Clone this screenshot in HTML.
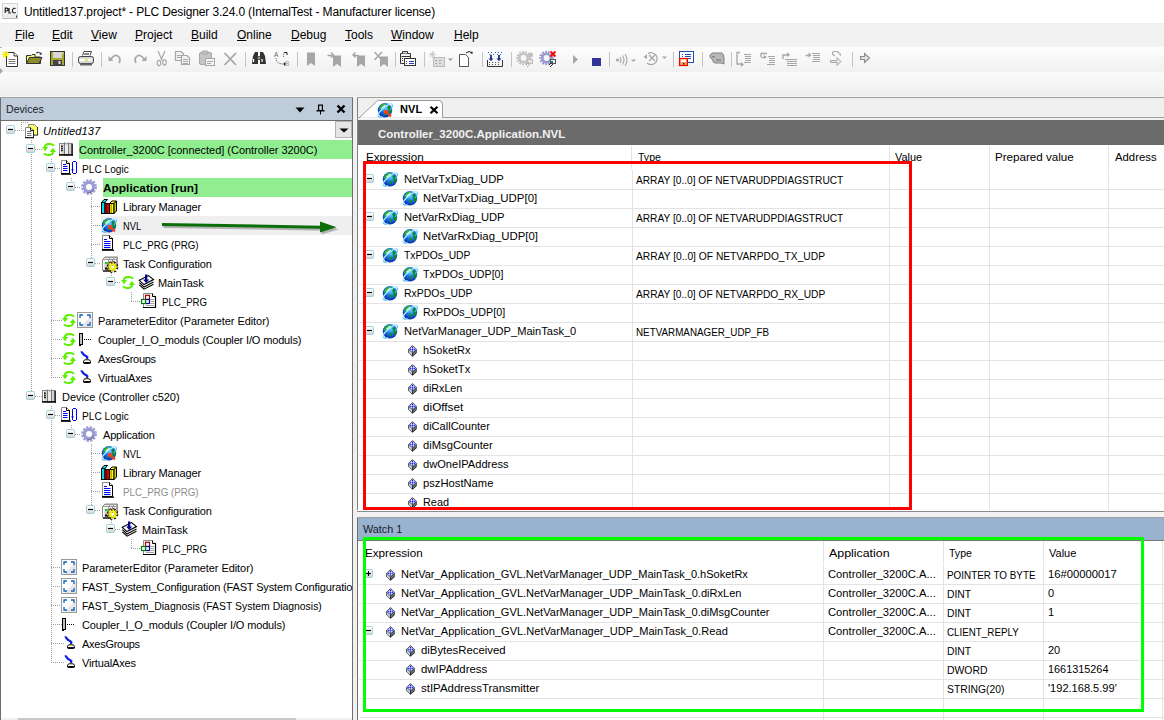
<!DOCTYPE html><html><head><meta charset="utf-8"><style>
*{margin:0;padding:0;box-sizing:border-box}
html,body{width:1164px;height:720px;overflow:hidden;background:#f0f0f0;font-family:"Liberation Sans", sans-serif;color:#000}
.a{position:absolute}
.t{position:absolute;white-space:nowrap;font-size:11px;line-height:19px;height:19px}
svg{position:absolute;overflow:visible}
.u{text-decoration:underline;text-underline-offset:1px}
</style></head><body>
<svg width="0" height="0" style="position:absolute"><defs>
<linearGradient id="gb" x1="0" y1="0" x2="0" y2="1"><stop offset="0" stop-color="#fff"/><stop offset="0.5" stop-color="#f4f4f4"/><stop offset="1" stop-color="#cfcfcf"/></linearGradient>
<radialGradient id="gl" cx="0.55" cy="0.35" r="0.7"><stop offset="0" stop-color="#60d0ff"/><stop offset="0.5" stop-color="#1a70e0"/><stop offset="1" stop-color="#0820a0"/></radialGradient>
<linearGradient id="gear" x1="0" y1="0" x2="1" y2="1"><stop offset="0" stop-color="#a8a8dc"/><stop offset="1" stop-color="#8080b8"/></linearGradient>
</defs></svg>
<div class="a" style="left:0px;top:0px;width:1164px;height:23px;background:#fff"></div>
<svg style="left:2px;top:3px" width="16" height="16" viewBox="0 0 16 16"><rect x="0.5" y="0.5" width="15" height="15" fill="#f6f6f6" stroke="#d4d4d4"/><rect x="1" y="11" width="14" height="4" fill="#ececec"/><path d="M1 15.5H16" stroke="#b8b8b8"/><path d="M3.2 10V5.2H4.6Q6 5.2 6 6.6T4.6 8H3.4M7 5V10H9.2M13.6 5.6Q12.6 5 11.6 5.4Q10.2 6.2 10.4 8.2Q10.8 10 12.2 10Q13.2 10 13.8 9.4" stroke="#222" stroke-width="1.2" fill="none"/><rect x="14" y="12.5" width="1" height="2" fill="#333"/></svg>
<div class="t" style="left:24px;top:3px;font-size:12px;line-height:19px;letter-spacing:-0.14px">Untitled137.project* - PLC Designer 3.24.0 (InternalTest - Manufacturer license)</div>
<div class="a" style="left:0px;top:23px;width:1164px;height:24px;background:#f2f2f2"></div>
<div class="a" style="left:0px;top:23px;width:1164px;height:1px;background:#efefef"></div>
<div class="t" style="left:15px;top:26px;font-size:12px;line-height:18px"><span class="u">F</span>ile</div>
<div class="t" style="left:52px;top:26px;font-size:12px;line-height:18px"><span class="u">E</span>dit</div>
<div class="t" style="left:91px;top:26px;font-size:12px;line-height:18px"><span class="u">V</span>iew</div>
<div class="t" style="left:135px;top:26px;font-size:12px;line-height:18px"><span class="u">P</span>roject</div>
<div class="t" style="left:191px;top:26px;font-size:12px;line-height:18px"><span class="u">B</span>uild</div>
<div class="t" style="left:237px;top:26px;font-size:12px;line-height:18px"><span class="u">O</span>nline</div>
<div class="t" style="left:291px;top:26px;font-size:12px;line-height:18px"><span class="u">D</span>ebug</div>
<div class="t" style="left:345px;top:26px;font-size:12px;line-height:18px"><span class="u">T</span>ools</div>
<div class="t" style="left:391px;top:26px;font-size:12px;line-height:18px"><span class="u">W</span>indow</div>
<div class="t" style="left:454px;top:26px;font-size:12px;line-height:18px"><span class="u">H</span>elp</div>
<div class="a" style="left:0px;top:47px;width:1164px;height:25px;background:linear-gradient(#fdfdfd,#f1f1f1)"></div>
<div class="a" style="left:0px;top:72px;width:1164px;height:24px;background:linear-gradient(#fbfbfb,#efefef)"></div>
<div class="a" style="left:0px;top:96px;width:1164px;height:1px;background:#f5f5f5"></div>
<svg style="left:0px;top:68px" width="4" height="6" viewBox="0 0 4 6"><path d="M0 0L3 3L0 6Z" fill="#a8a8a8"/></svg>
<div class="a" style="left:0px;top:47px;width:2px;height:1px;background:#b0b0b0"></div>
<div class="a" style="left:72px;top:52px;width:1px;height:15px;background:#c4c4c4"></div>
<div class="a" style="left:101px;top:52px;width:1px;height:15px;background:#c4c4c4"></div>
<div class="a" style="left:245px;top:52px;width:1px;height:15px;background:#c4c4c4"></div>
<div class="a" style="left:297px;top:52px;width:1px;height:15px;background:#c4c4c4"></div>
<div class="a" style="left:395px;top:52px;width:1px;height:15px;background:#c4c4c4"></div>
<div class="a" style="left:424px;top:52px;width:1px;height:15px;background:#c4c4c4"></div>
<div class="a" style="left:482px;top:52px;width:1px;height:15px;background:#c4c4c4"></div>
<div class="a" style="left:511px;top:52px;width:1px;height:15px;background:#c4c4c4"></div>
<div class="a" style="left:609px;top:52px;width:1px;height:15px;background:#c4c4c4"></div>
<div class="a" style="left:673px;top:52px;width:1px;height:15px;background:#c4c4c4"></div>
<div class="a" style="left:702px;top:52px;width:1px;height:15px;background:#c4c4c4"></div>
<div class="a" style="left:731px;top:52px;width:1px;height:15px;background:#c4c4c4"></div>
<div class="a" style="left:852px;top:52px;width:1px;height:15px;background:#c4c4c4"></div>
<svg style="left:2px;top:51px" width="26" height="16" viewBox="0 0 26 16"><path d="M4.5 1.5H12L15.5 5V15.5H4.5Z" fill="#fff" stroke="#333"/><path d="M12 1.5V5H15.5" fill="#eee" stroke="#333"/><path d="M6.5 8.5H13.5M6.5 10.5H13.5M6.5 12.5H13.5" stroke="#777"/><path d="M1 1L6 6M6 1L1 6M3.5 0V7M0 3.5H7" stroke="#f0f000" stroke-width="1.1"/></svg>
<svg style="left:26px;top:51px" width="26" height="16" viewBox="0 0 26 16"><path d="M10 2Q13 0 15 3" stroke="#222" fill="none"/><path d="M13.5 3.5H16L15 1Z" fill="#222"/><path d="M0.5 4.5H5L6 3.5H9V6H14.5V12.5H0.5Z" fill="#f4f470" stroke="#333"/><path d="M0.5 12.5L3.5 6.5H16L13 12.5Z" fill="#8c8c28" stroke="#333"/></svg>
<svg style="left:50px;top:51px" width="26" height="16" viewBox="0 0 26 16"><rect x="0.5" y="0.5" width="14" height="14" fill="#a8a830" stroke="#333"/><rect x="3" y="1" width="9" height="6" fill="#d8d8d8"/><rect x="3" y="9" width="9" height="5.5" fill="#444"/><rect x="8.5" y="10" width="2" height="3" fill="#ddd"/><rect x="12.3" y="1.5" width="1.2" height="1.2" fill="#fff"/></svg>
<svg style="left:78px;top:51px" width="26" height="16" viewBox="0 0 26 16"><path d="M4.5 4.5L6 0.5H13.5L12 4.5" fill="#fff" stroke="#444"/><path d="M6.5 2.5H11M6 3.5H11" stroke="#888"/><rect x="0.5" y="5.5" width="15" height="7" rx="2" fill="#d8d8d8" stroke="#444"/><rect x="1.5" y="8" width="12" height="2" fill="#fff"/><rect x="7" y="8.5" width="3" height="1.2" fill="#e8d000"/><rect x="2" y="12.5" width="12" height="2" fill="#666"/></svg>
<svg style="left:108px;top:51px" width="26" height="16" viewBox="0 0 26 16"><path d="M3 8Q7 2 11 6Q13 9 11 12" stroke="#a6a6a6" stroke-width="1.6" fill="none"/><path d="M0.5 5L5.5 10H0.5Z" fill="#a6a6a6"/></svg>
<svg style="left:131px;top:51px" width="26" height="16" viewBox="0 0 26 16"><path d="M13 8Q9 2 5 6Q3 9 5 12" stroke="#a6a6a6" stroke-width="1.6" fill="none"/><path d="M15.5 5L10.5 10H15.5Z" fill="#a6a6a6"/></svg>
<svg style="left:155px;top:51px" width="26" height="16" viewBox="0 0 26 16"><path d="M3 0L7 9M10 0L6 9" stroke="#a6a6a6" stroke-width="1.2"/><ellipse cx="4" cy="12" rx="1.8" ry="2.6" fill="none" stroke="#a6a6a6" stroke-width="1.1"/><ellipse cx="9.5" cy="11.5" rx="1.8" ry="2.6" fill="none" stroke="#a6a6a6" stroke-width="1.1"/></svg>
<svg style="left:175px;top:51px" width="26" height="16" viewBox="0 0 26 16"><path d="M0.5 0.5H6L8.5 3V9.5H0.5Z" fill="#f4f4f4" stroke="#a6a6a6" stroke-width="1.2"/><path d="M2 4.5H6M2 6.5H6" stroke="#a6a6a6"/><path d="M6.5 4.5H12L14.5 7V13.5H6.5Z" fill="#f4f4f4" stroke="#a6a6a6" stroke-width="1.2"/><path d="M8 8.5H13M8 10.5H13M8 12.5H13" stroke="#a6a6a6"/></svg>
<svg style="left:199px;top:51px" width="26" height="16" viewBox="0 0 26 16"><rect x="0.5" y="1.5" width="12" height="12" rx="1.5" fill="#c4c4c4" stroke="#a6a6a6"/><rect x="3" y="0" width="6" height="3" rx="1" fill="#c4c4c4" stroke="#a6a6a6"/><rect x="6.5" y="7.5" width="9" height="7" fill="#f4f4f4" stroke="#a6a6a6"/><path d="M8 10.5H14M8 12.5H12" stroke="#a6a6a6"/></svg>
<svg style="left:223px;top:51px" width="26" height="16" viewBox="0 0 26 16"><path d="M1.5 2L13 14M13 2L1.5 14" stroke="#a6a6a6" stroke-width="1.8"/></svg>
<svg style="left:251px;top:51px" width="26" height="16" viewBox="0 0 26 16"><path d="M1 13L2 5L4 1H7V13Z" fill="#333"/><path d="M15 13L14 5L12 1H9V13Z" fill="#333"/><rect x="6.5" y="5" width="3" height="4" fill="#555"/><rect x="2" y="8" width="1.2" height="3" fill="#fff"/><rect x="10.5" y="8" width="1.2" height="3" fill="#fff"/><rect x="7.5" y="6" width="1" height="2" fill="#ee8"/></svg>
<svg style="left:274px;top:51px" width="26" height="16" viewBox="0 0 26 16"><text x="0" y="6" font-size="6.5" font-family="Liberation Sans" fill="#666">A</text><text x="11" y="14.5" font-size="6.5" font-family="Liberation Sans" fill="#999">B</text><path d="M2 7Q2 13 10 13M10 6Q8 4 11 1" stroke="#444" stroke-dasharray="1 1" fill="none"/><path d="M10 11L12 13L10 15Z" fill="#222"/><path d="M10 1.5H13V4" stroke="#222" fill="none"/></svg>
<svg style="left:306px;top:51px" width="26" height="16" viewBox="0 0 26 16"><path d="M1 1.5H9V15L5 12L1 15Z" fill="#a6a6a6"/></svg>
<svg style="left:327px;top:51px" width="26" height="16" viewBox="0 0 26 16"><path d="M6 4.5H14V16L10 13L6 16Z" fill="#a6a6a6"/><path d="M0.5 4.5H6M4 1.5L6.5 4L4 6.5" stroke="#a6a6a6" stroke-width="1.4" fill="none"/></svg>
<svg style="left:351px;top:51px" width="26" height="16" viewBox="0 0 26 16"><path d="M6 4.5H14V16L10 13L6 16Z" fill="#a6a6a6"/><path d="M2 4.5H8M4.5 1.5L2 4L4.5 6.5" stroke="#a6a6a6" stroke-width="1.4" fill="none"/></svg>
<svg style="left:374px;top:51px" width="26" height="16" viewBox="0 0 26 16"><path d="M6 5.5H14V16L10 13L6 16Z" fill="#a6a6a6"/><path d="M0.5 1L8 9M8 1L0.5 9" stroke="#a6a6a6" stroke-width="1.4"/></svg>
<svg style="left:400px;top:51px" width="26" height="16" viewBox="0 0 26 16"><path d="M0.5 2.5H10.5V12.5H0.5Z" fill="#f4f4f4" stroke="#333"/><path d="M2.5 2.5V0.5H7.5V2.5" fill="#ddd" stroke="#333"/><path d="M1.5 5.5H10M2 7.5H3M2 9.5H3" stroke="#333"/><rect x="4.5" y="7.5" width="11" height="7" fill="#fff" stroke="#333"/><path d="M6 10.5H7M9 10.5H14M6 12.5H7M9 12.5H14" stroke="#1f3fb0" stroke-width="1.2"/></svg>
<svg style="left:429px;top:51px" width="26" height="16" viewBox="0 0 26 16"><rect x="4.5" y="6.5" width="11" height="9" fill="#ddd" stroke="#bbb"/><path d="M1 1L6 6M6 1L1 6M3.5 0V7M0 3.5H7" stroke="#ccc"/><path d="M6 9.5H8M10 9.5H12M6 12.5H8M10 12.5H12" stroke="#aaa"/><path d="M19 7.5H24L21.5 10Z" fill="#999"/></svg>
<svg style="left:459px;top:51px" width="26" height="16" viewBox="0 0 26 16"><path d="M0.5 3.5H6.5L9.5 6.5V15.5H0.5Z" fill="#fff" stroke="#555"/><path d="M7 2Q10 -1 13 2" stroke="#222" fill="none"/><path d="M11.5 2.5H14L13 0Z" fill="#222"/></svg>
<svg style="left:487px;top:51px" width="26" height="16" viewBox="0 0 26 16"><path d="M1 1.5H2M4 1.5H5M8 1.5H9M11 1.5H12M14 1.5H15M2.5 3.5H3.5M6 3.5H7M10 3.5H11M13 3.5H14" stroke="#3050c0"/><path d="M4 4V8M12 4V8" stroke="#1a2a90" stroke-width="1.8"/><path d="M1.5 7.5H6.5L4 10Z M9.5 7.5H14.5L12 10Z" fill="#1a2a90"/><path d="M0.5 9V15.5H15.5V9" fill="none" stroke="#333"/><path d="M2 11.5H3M5 11.5H6M8 11.5H9M11 11.5H12M2 13.5H3M5 13.5H6M8 13.5H9M11 13.5H12" stroke="#555"/></svg>
<svg style="left:517px;top:51px" width="26" height="16" viewBox="0 0 26 16"><circle cx="6.5" cy="7" r="6.2" fill="none" stroke="#c4c4c4" stroke-width="2.2" stroke-dasharray="1.8 1.2"/><circle cx="6.5" cy="7" r="4.2" fill="none" stroke="#c4c4c4" stroke-width="2.6"/><circle cx="13.5" cy="4" r="2.5" fill="#c0c0c0"/><rect x="10.5" y="8.5" width="5" height="4" fill="#e4e4e4" stroke="#bbb"/><path d="M9 14L12 11M10 16L13 13" stroke="#aaa"/></svg>
<svg style="left:540px;top:51px" width="26" height="16" viewBox="0 0 26 16"><circle cx="6.5" cy="7" r="6.2" fill="none" stroke="#9a9ad0" stroke-width="2.2" stroke-dasharray="1.8 1.2"/><circle cx="6.5" cy="7" r="4.2" fill="none" stroke="#9a9ad0" stroke-width="2.6"/><path d="M10.5 0.5L15.5 5.5M15.5 0.5L10.5 5.5" stroke="#ff0000" stroke-width="1.8"/><rect x="10.5" y="8.5" width="5" height="4" fill="#eee" stroke="#555"/><path d="M9 14L12 11M10 16L13 13" stroke="#222"/><rect x="11" y="10" width="2" height="2" fill="#108080"/></svg>
<svg style="left:572px;top:51px" width="26" height="16" viewBox="0 0 26 16"><path d="M1 4L6 8.5L1 13Z" fill="#a6a6a6"/></svg>
<svg style="left:592px;top:51px" width="26" height="16" viewBox="0 0 26 16"><rect x="0" y="7" width="9" height="8" fill="#333399"/></svg>
<svg style="left:615px;top:51px" width="26" height="16" viewBox="0 0 26 16"><g transform="translate(0,3)"><circle cx="2.5" cy="6" r="1.6" fill="#a6a6a6"/><path d="M5 3Q7 6 5 9M7.5 1.5Q10.5 6 7.5 10.5M10 0Q14 6 10 12" stroke="#a6a6a6" stroke-width="1.1" fill="none"/><path d="M16 5.5H21L18.5 8Z" fill="#a6a6a6"/></g></svg>
<svg style="left:643px;top:51px" width="26" height="16" viewBox="0 0 26 16"><path d="M5 2.5A6 6 0 1 1 4 12" stroke="#a6a6a6" stroke-width="1.2" fill="none"/><path d="M0.5 6L4 3V8Z" fill="#a6a6a6"/><path d="M6 4L12 10M12 4L6 10" stroke="#a6a6a6" stroke-width="1.3"/><path d="M19 5.5H24L21.5 8Z" fill="#a6a6a6"/></svg>
<svg style="left:679px;top:51px" width="26" height="16" viewBox="0 0 26 16"><rect x="0.5" y="0.5" width="14" height="11" fill="#fff" stroke="#1f4fb0"/><path d="M3 3.5H4M6 3.5H12M3 5.5H4M6 5.5H12M3 7.5H4M6 7.5H12" stroke="#1f4fb0" stroke-width="1.2"/><rect x="0.5" y="7.5" width="8" height="7" fill="#f4a060" stroke="#ff0000" stroke-width="1.2"/><rect x="2" y="8.5" width="5" height="2.5" fill="#fff"/><rect x="4" y="12" width="1.5" height="1.5" fill="#222"/></svg>
<svg style="left:709px;top:51px" width="26" height="16" viewBox="0 0 26 16"><path d="M1 4Q3 1 7 2H13Q15 3 15 7V13L12 12H6Q3 11 4 9Q2 8 1 6Z" fill="#b8b8b8" stroke="#808080"/><path d="M3 6Q5 5 6 6M7 9H12" stroke="#707070" fill="none"/></svg>
<svg style="left:736px;top:51px" width="26" height="16" viewBox="0 0 26 16"><path d="M4 1.5H1V13H6" stroke="#a6a6a6" stroke-width="1.3" fill="none"/><path d="M5 11L8 13.5L5 16Z" fill="#a6a6a6"/><path d="M8 3.5H15M9 5.5H15M9 7.5H15M9 9.5H15M8 11.5H15" stroke="#a6a6a6" stroke-width="1.1"/></svg>
<svg style="left:760px;top:51px" width="26" height="16" viewBox="0 0 26 16"><path d="M7 2.5H1V6" stroke="#a6a6a6" stroke-width="1.3" fill="none"/><path d="M1.5 6.5H5" stroke="#a6a6a6" stroke-width="1.3"/><path d="M4 4L7 6L4 8Z" fill="#a6a6a6"/><path d="M8 5.5H15M9 7.5H15M9 9.5H15M9 11.5H15M7 13.5H15" stroke="#a6a6a6" stroke-width="1.1"/></svg>
<svg style="left:782px;top:51px" width="26" height="16" viewBox="0 0 26 16"><path d="M1 8V4H6" stroke="#a6a6a6" stroke-width="1.3" fill="none"/><path d="M5 1L8 4L5 6Z" fill="#a6a6a6"/><path d="M3 8.5H7M5 10.5H15M5 12.5H15M5 14.5H15M6 8.5H15" stroke="#a6a6a6" stroke-width="1.1"/></svg>
<svg style="left:805px;top:51px" width="26" height="16" viewBox="0 0 26 16"><path d="M0.5 4.5H4" stroke="#a6a6a6" stroke-width="1.5"/><path d="M3.5 1.5L6.5 4L3.5 6.5Z" fill="#a6a6a6"/><path d="M7 2.5H15M8 4.5H15M8 6.5H15M8 8.5H15M7 10.5H15" stroke="#a6a6a6" stroke-width="1.1"/></svg>
<svg style="left:830px;top:51px" width="26" height="16" viewBox="0 0 26 16"><path d="M5 5Q1 3 3 1Q6 -1 9 2" stroke="#a6a6a6" stroke-width="1.1" fill="none"/><path d="M8 2.5H11V5Z" fill="#a6a6a6"/><path d="M0.5 9.5H7V6.5L11 10.5L7 14.5V11.5H0.5Z" fill="#e6e6e6" stroke="#a6a6a6"/></svg>
<svg style="left:860px;top:51px" width="26" height="16" viewBox="0 0 26 16"><path d="M0.5 5.5H4.5V2.5L9.5 7L4.5 11.5V8.5H0.5Z" fill="#e4e4e4" stroke="#8a8a8a" stroke-width="1.1"/></svg>
<div class="a" style="left:0px;top:97px;width:353px;height:623px;background:#fff;border-left:1px solid #6e6e6e;border-right:1px solid #6e6e6e"></div>
<div class="a" style="left:0px;top:97px;width:353px;height:1px;background:#a0a0a0"></div>
<div class="a" style="left:1px;top:98px;width:351px;height:22px;background:#bfcddb"></div>
<div class="a" style="left:1px;top:120px;width:351px;height:1px;background:#6e6e6e"></div>
<div class="t" style="left:6px;top:100px;font-size:10.6px;line-height:19px;color:#1a1a2a">Devices</div>
<svg style="left:295px;top:107px" width="10" height="6" viewBox="0 0 10 6"><path d="M0.5 0.5H9.5L5 5.5Z" fill="#000"/></svg>
<svg style="left:316px;top:104px" width="9" height="11" viewBox="0 0 9 11"><path d="M2 0.5H7V6H8.5V7.5H5V10.5H4V7.5H0.5V6H2Z" fill="#000"/><rect x="3.2" y="1.7" width="2.6" height="4.3" fill="#bfcddb"/></svg>
<svg style="left:336px;top:104px" width="10" height="10" viewBox="0 0 10 10"><path d="M1.5 1.5L8.5 8.5M8.5 1.5L1.5 8.5" stroke="#000" stroke-width="2.4"/></svg>
<div class="a" style="left:335px;top:121px;width:17px;height:17px;background:#e5e5e5;border:1px solid #b4b4b4"></div>
<svg style="left:339px;top:128px" width="10" height="5" viewBox="0 0 10 5"><path d="M0.5 0.5H9.5L5 4.5Z" fill="#000"/></svg>
<div class="a" style="left:1px;top:718px;width:351px;height:2px;background:#f0f0f0"></div>
<div class="a" style="left:18px;top:718px;width:278px;height:2px;background:#c8c8c8"></div>
<div class="a" style="left:1px;top:121px;width:351px;height:597px;overflow:hidden">
<div class="a" style="left:78px;top:19px;width:273px;height:19px;background:#90ee90"></div>
<div class="a" style="left:102px;top:57px;width:249px;height:19px;background:#90ee90"></div>
<div class="a" style="left:100px;top:95px;width:251px;height:19px;background:#efefef"></div>
<div class="a" style="left:20px;top:1px;width:1px;height:8px;background:repeating-linear-gradient(180deg,#a0a0a0 0 1px,transparent 1px 2px)"></div>
<div class="a" style="left:20px;top:1px;width:8px;height:1px;background:repeating-linear-gradient(90deg,#a0a0a0 0 1px,transparent 1px 2px)"></div>
<div class="a" style="left:30px;top:19px;width:1px;height:256px;background:repeating-linear-gradient(180deg,#a0a0a0 0 1px,transparent 1px 2px)"></div>
<div class="a" style="left:50px;top:38px;width:1px;height:218px;background:repeating-linear-gradient(180deg,#a0a0a0 0 1px,transparent 1px 2px)"></div>
<div class="a" style="left:70px;top:57px;width:1px;height:9px;background:repeating-linear-gradient(180deg,#a0a0a0 0 1px,transparent 1px 2px)"></div>
<div class="a" style="left:90px;top:76px;width:1px;height:66px;background:repeating-linear-gradient(180deg,#a0a0a0 0 1px,transparent 1px 2px)"></div>
<div class="a" style="left:110px;top:152px;width:1px;height:9px;background:repeating-linear-gradient(180deg,#a0a0a0 0 1px,transparent 1px 2px)"></div>
<div class="a" style="left:130px;top:171px;width:1px;height:9px;background:repeating-linear-gradient(180deg,#a0a0a0 0 1px,transparent 1px 2px)"></div>
<div class="a" style="left:50px;top:285px;width:1px;height:256px;background:repeating-linear-gradient(180deg,#a0a0a0 0 1px,transparent 1px 2px)"></div>
<div class="a" style="left:70px;top:304px;width:1px;height:9px;background:repeating-linear-gradient(180deg,#a0a0a0 0 1px,transparent 1px 2px)"></div>
<div class="a" style="left:90px;top:323px;width:1px;height:66px;background:repeating-linear-gradient(180deg,#a0a0a0 0 1px,transparent 1px 2px)"></div>
<div class="a" style="left:110px;top:399px;width:1px;height:9px;background:repeating-linear-gradient(180deg,#a0a0a0 0 1px,transparent 1px 2px)"></div>
<div class="a" style="left:130px;top:418px;width:1px;height:9px;background:repeating-linear-gradient(180deg,#a0a0a0 0 1px,transparent 1px 2px)"></div>
<div class="a" style="left:14px;top:9px;width:9px;height:1px;background:repeating-linear-gradient(90deg,#a0a0a0 0 1px,transparent 1px 2px)"></div>
<div class="a" style="left:34px;top:28px;width:7px;height:1px;background:repeating-linear-gradient(90deg,#a0a0a0 0 1px,transparent 1px 2px)"></div>
<div class="a" style="left:54px;top:47px;width:5px;height:1px;background:repeating-linear-gradient(90deg,#a0a0a0 0 1px,transparent 1px 2px)"></div>
<div class="a" style="left:74px;top:66px;width:6px;height:1px;background:repeating-linear-gradient(90deg,#a0a0a0 0 1px,transparent 1px 2px)"></div>
<div class="a" style="left:94px;top:142px;width:6px;height:1px;background:repeating-linear-gradient(90deg,#a0a0a0 0 1px,transparent 1px 2px)"></div>
<div class="a" style="left:114px;top:161px;width:6px;height:1px;background:repeating-linear-gradient(90deg,#a0a0a0 0 1px,transparent 1px 2px)"></div>
<div class="a" style="left:34px;top:275px;width:7px;height:1px;background:repeating-linear-gradient(90deg,#a0a0a0 0 1px,transparent 1px 2px)"></div>
<div class="a" style="left:54px;top:294px;width:5px;height:1px;background:repeating-linear-gradient(90deg,#a0a0a0 0 1px,transparent 1px 2px)"></div>
<div class="a" style="left:74px;top:313px;width:6px;height:1px;background:repeating-linear-gradient(90deg,#a0a0a0 0 1px,transparent 1px 2px)"></div>
<div class="a" style="left:94px;top:389px;width:6px;height:1px;background:repeating-linear-gradient(90deg,#a0a0a0 0 1px,transparent 1px 2px)"></div>
<div class="a" style="left:114px;top:408px;width:6px;height:1px;background:repeating-linear-gradient(90deg,#a0a0a0 0 1px,transparent 1px 2px)"></div>
<div class="a" style="left:90px;top:85px;width:10px;height:1px;background:repeating-linear-gradient(90deg,#a0a0a0 0 1px,transparent 1px 2px)"></div>
<div class="a" style="left:90px;top:104px;width:10px;height:1px;background:repeating-linear-gradient(90deg,#a0a0a0 0 1px,transparent 1px 2px)"></div>
<div class="a" style="left:90px;top:123px;width:10px;height:1px;background:repeating-linear-gradient(90deg,#a0a0a0 0 1px,transparent 1px 2px)"></div>
<div class="a" style="left:130px;top:180px;width:9px;height:1px;background:repeating-linear-gradient(90deg,#a0a0a0 0 1px,transparent 1px 2px)"></div>
<div class="a" style="left:50px;top:199px;width:11px;height:1px;background:repeating-linear-gradient(90deg,#a0a0a0 0 1px,transparent 1px 2px)"></div>
<div class="a" style="left:50px;top:218px;width:11px;height:1px;background:repeating-linear-gradient(90deg,#a0a0a0 0 1px,transparent 1px 2px)"></div>
<div class="a" style="left:50px;top:237px;width:11px;height:1px;background:repeating-linear-gradient(90deg,#a0a0a0 0 1px,transparent 1px 2px)"></div>
<div class="a" style="left:50px;top:256px;width:11px;height:1px;background:repeating-linear-gradient(90deg,#a0a0a0 0 1px,transparent 1px 2px)"></div>
<div class="a" style="left:90px;top:332px;width:10px;height:1px;background:repeating-linear-gradient(90deg,#a0a0a0 0 1px,transparent 1px 2px)"></div>
<div class="a" style="left:90px;top:351px;width:10px;height:1px;background:repeating-linear-gradient(90deg,#a0a0a0 0 1px,transparent 1px 2px)"></div>
<div class="a" style="left:90px;top:370px;width:10px;height:1px;background:repeating-linear-gradient(90deg,#a0a0a0 0 1px,transparent 1px 2px)"></div>
<div class="a" style="left:130px;top:427px;width:9px;height:1px;background:repeating-linear-gradient(90deg,#a0a0a0 0 1px,transparent 1px 2px)"></div>
<div class="a" style="left:50px;top:446px;width:10px;height:1px;background:repeating-linear-gradient(90deg,#a0a0a0 0 1px,transparent 1px 2px)"></div>
<div class="a" style="left:50px;top:465px;width:10px;height:1px;background:repeating-linear-gradient(90deg,#a0a0a0 0 1px,transparent 1px 2px)"></div>
<div class="a" style="left:50px;top:484px;width:10px;height:1px;background:repeating-linear-gradient(90deg,#a0a0a0 0 1px,transparent 1px 2px)"></div>
<div class="a" style="left:50px;top:503px;width:11px;height:1px;background:repeating-linear-gradient(90deg,#a0a0a0 0 1px,transparent 1px 2px)"></div>
<div class="a" style="left:50px;top:522px;width:13px;height:1px;background:repeating-linear-gradient(90deg,#a0a0a0 0 1px,transparent 1px 2px)"></div>
<div class="a" style="left:50px;top:541px;width:13px;height:1px;background:repeating-linear-gradient(90deg,#a0a0a0 0 1px,transparent 1px 2px)"></div>
<svg style="left:5px;top:4px" width="9" height="9" viewBox="0 0 9 9"><rect x="0.5" y="0.5" width="8" height="8" rx="1.2" fill="url(#gb)" stroke="#9fd0d8"/><path d="M2 4.5H7" stroke="#000" stroke-width="1.2"/></svg>
<svg style="left:23px;top:2px" width="14" height="16" viewBox="0 0 14 16"><path d="M4.5 5V1.5H10.5L13.5 4.5V12H9" fill="#fff" stroke="#8a8a8a"/><path d="M13.5 4V12H9.5" stroke="#333" stroke-width="1.2" fill="none"/><path d="M5 2H10L13 5V11.5H10.5V9L7.5 5H5Z" fill="#ffff30"/><path d="M6 2.5L7 3.5M8 2.5L9 3.5M7 3.5L8 4.5M9 3.5L10 4.5M10 4.5L11 5.5M11 5.5L12 6.5M11 7.5L12 8.5M12 6.5L13 7.5M11 9.5L12 10.5M12 8.5L13 9.5" stroke="#fff" stroke-width="0.9"/><path d="M1.5 14.5V4.5H6.5L9.5 7.5V14.5Z" fill="#fff" stroke="#8a8a8a"/><path d="M9.5 7V14.5H1" stroke="#222" fill="none"/><rect x="1" y="14" width="9" height="1.3" fill="#222"/><path d="M6.5 4.5V7.5H9.5" stroke="#222" fill="none"/><path d="M3 8.5H7.5M3 10.5H7.5M3 12.5H7.5" stroke="#777"/></svg>
<div class="t" style="left:42px;top:1px;letter-spacing:0.16px;font-style:italic;color:#000;">Untitled137</div>
<svg style="left:25px;top:23px" width="9" height="9" viewBox="0 0 9 9"><rect x="0.5" y="0.5" width="8" height="8" rx="1.2" fill="url(#gb)" stroke="#9fd0d8"/><path d="M2 4.5H7" stroke="#000" stroke-width="1.2"/></svg>
<svg style="left:41px;top:22px" width="14" height="13" viewBox="0 0 14 13"><g fill="none" stroke="#5ef000" stroke-width="2"><path d="M2.8 4.5Q3 1.2 6.5 1H8.5Q11 1.2 12 2.8"/><path d="M11.2 8.5Q11 11.8 7.5 12H5.5Q3 11.8 2 10.2"/></g><path d="M0 4H6.2L3.1 8.2Z" fill="#5ef000"/><path d="M14 9H7.8L10.9 4.8Z" fill="#5ef000"/></svg>
<svg style="left:58px;top:21px" width="13" height="14" viewBox="0 0 13 14"><rect x="0.5" y="1.5" width="12" height="11" fill="#d4d4d4" stroke="#8a8a8a"/><rect x="1" y="2" width="1.2" height="10" fill="#fff"/><rect x="6" y="0.5" width="3" height="13" fill="#ececec"/><path d="M5.5 0.5V13.5M9.5 0.5V13.5" stroke="#7a7a7a"/><path d="M6.3 0.8L7.5 2.3L8.7 0.8" stroke="#7a7a7a" fill="none"/><path d="M6.3 13.5L7.5 12.2L8.7 13.5" stroke="#222" fill="none"/><rect x="0" y="12.2" width="14" height="1.5" fill="#000"/><rect x="12.6" y="1.5" width="1.2" height="12" fill="#000"/><circle cx="2.9" cy="4.2" r="0.9" fill="#000"/><circle cx="2.9" cy="6.3" r="0.9" fill="#000"/><circle cx="2.9" cy="8.4" r="0.9" fill="#000"/></svg>
<div class="t" style="left:78px;top:20px;letter-spacing:-0.03px;">Controller_3200C [connected] (Controller 3200C)</div>
<svg style="left:45px;top:42px" width="9" height="9" viewBox="0 0 9 9"><rect x="0.5" y="0.5" width="8" height="8" rx="1.2" fill="url(#gb)" stroke="#9fd0d8"/><path d="M2 4.5H7" stroke="#000" stroke-width="1.2"/></svg>
<svg style="left:59px;top:39px" width="18" height="16" viewBox="0 0 18 16"><path d="M1.5 13.5V0.5H6.5L9.5 3.5V13.5Z" fill="#fff" stroke="#8a8a8a"/><path d="M9.5 3V13.5H1" stroke="#000" fill="none"/><rect x="1" y="13.5" width="10" height="1.3" fill="#000"/><path d="M6.5 0.5V3.5H9.5" stroke="#000" fill="none"/><path d="M3 4.5H6M3 6.5H7.5M3 8.5H7.5M3 10.5H7.5" stroke="#0000ff" stroke-width="1.2"/><path d="M12.5 2V13M16.5 2V13M13 1.5H16M13 13.5H16" stroke="#0000ff" fill="none"/><path d="M11 9.5H14L12.5 11.5Z" fill="#0000ff"/></svg>
<div class="t" style="left:81px;top:39px;transform:scaleX(0.9204);transform-origin:0 0;">PLC Logic</div>
<svg style="left:65px;top:61px" width="9" height="9" viewBox="0 0 9 9"><rect x="0.5" y="0.5" width="8" height="8" rx="1.2" fill="url(#gb)" stroke="#9fd0d8"/><path d="M2 4.5H7" stroke="#000" stroke-width="1.2"/></svg>
<svg style="left:80px;top:58px" width="16" height="16" viewBox="0 0 16 16"><circle cx="8" cy="8" r="6.6" fill="none" stroke="#9c9cd4" stroke-width="2.6" stroke-dasharray="2.2 1.3"/><circle cx="8" cy="8" r="4.6" fill="none" stroke="#9c9cd4" stroke-width="3.2"/><path d="M12.5 10A6 6 0 0 1 6 13.6" stroke="#6a6a90" stroke-width="1.2" fill="none" opacity="0.7"/></svg>
<div class="t" style="left:102px;top:58px;transform:scaleX(1.0795);transform-origin:0 0;font-weight:bold;">Application [run]</div>
<svg style="left:100px;top:77px" width="16" height="16" viewBox="0 0 16 16"><path d="M0.5 4.5L3 1.5H6.5L4 4.5Z" fill="#00e0e8" stroke="#000"/><rect x="0.5" y="4.5" width="3.5" height="11" fill="#00e0e8" stroke="#000"/><rect x="4" y="5.5" width="4.5" height="10" fill="#e00000" stroke="#000"/><rect x="5" y="6" width="1.2" height="9" fill="#800000"/><path d="M8.5 5.5L11 3H15.5L13 5.5Z" fill="#ffff00" stroke="#000"/><rect x="8.5" y="5.5" width="4.5" height="10" fill="#ffff00" stroke="#000"/><path d="M13 5.5L15.5 3V13L13 15.5Z" fill="#c8c800" stroke="#000"/><rect x="9.5" y="6" width="1.3" height="9" fill="#a0a000"/></svg>
<div class="t" style="left:122px;top:77px;letter-spacing:-0.143px;">Library Manager</div>
<svg style="left:100px;top:96px" width="16" height="16" viewBox="0 0 16 16"><circle cx="8" cy="8.3" r="7.2" fill="url(#gl)"/><path d="M2.5 5.5Q4 2 8 1.8Q9.5 3 8.5 4.5Q7 6.5 5 6Q3.5 7.5 2 8Z" fill="#2cb82c"/><path d="M11 3.5Q14 5 14.8 8Q14.5 11 12.5 12Q11 10 11.5 8Q10 6 11 3.5Z" fill="#0c8a1c"/><path d="M7.5 9.5Q9.5 9 10 11Q9.5 13 8.5 13.5Q7.5 12 7.5 9.5Z" fill="#109020"/><path d="M1.2 14.2Q0.5 12 4 8.5T12 2.2Q15 1 15.3 2.6" stroke="#a8ecff" stroke-width="1.3" fill="none"/><path d="M4.5 6.5L8.5 3" stroke="#e8ffff" stroke-width="1.1"/><path d="M15.3 2.6Q15.8 5 13 8" stroke="#40b8f0" stroke-width="1.1" fill="none"/><path d="M1.2 14.2Q2.5 15.8 6 14.5" stroke="#40b8f0" stroke-width="1.1" fill="none"/><path d="M8.5 9.5L14 14.5" stroke="#ff4010" stroke-width="2.2"/><path d="M7 8H11.5L7 12.5Z" fill="#ff4010"/></svg>
<div class="t" style="left:122px;top:96px;transform:scaleX(0.85);transform-origin:0 0;">NVL</div>
<svg style="left:100px;top:114px" width="13" height="17" viewBox="0 0 13 17"><path d="M1.5 14.5V0.5H8.5L11.5 3.5V14.5Z" fill="#fff" stroke="#8a8a8a"/><path d="M11.5 3V14.5H1" stroke="#000" fill="none"/><rect x="1" y="14.5" width="12" height="1.3" fill="#000"/><path d="M8.5 0.5V3.5H11.5" stroke="#000" fill="none"/><path d="M3 4.5H6M3 6.5H9.5M3 8.5H9.5M3 10.5H9.5" stroke="#0000ff" stroke-width="1.2"/><path d="M3 12.5H9.5" stroke="#0000ff" stroke-width="1.2"/></svg>
<div class="t" style="left:122px;top:115px;transform:scaleX(0.8833);transform-origin:0 0;">PLC_PRG (PRG)</div>
<svg style="left:85px;top:137px" width="9" height="9" viewBox="0 0 9 9"><rect x="0.5" y="0.5" width="8" height="8" rx="1.2" fill="url(#gb)" stroke="#9fd0d8"/><path d="M2 4.5H7" stroke="#000" stroke-width="1.2"/></svg>
<svg style="left:100px;top:134px" width="16" height="16" viewBox="0 0 16 16"><path d="M1.5 15.5V4.5L4 2H16.5V14" fill="#ececec" stroke="#8a8a8a"/><path d="M4 2.5H16M7.5 4.5L10 2M11.5 4.5L14 2M1.5 4.5H15" stroke="#9a9a9a" fill="none"/><rect x="2" y="5" width="5.5" height="10.5" fill="#fafafa"/><rect x="3.5" y="7" width="3.5" height="8" fill="#d0d0d0"/><rect x="15" y="3" width="1.5" height="11" fill="#a8a8a8"/><path d="M7.5 4.5V15.5M11.5 4.5V12" stroke="#8a8a8a"/><rect x="4" y="7" width="2.5" height="1.8" fill="#00c000"/><rect x="9" y="7" width="2" height="1.2" fill="#a00000"/><rect x="13" y="7" width="2" height="1.2" fill="#a00000"/><rect x="2" y="15.3" width="8" height="1.4" fill="#000"/><rect x="4" y="12.5" width="2" height="2" fill="#000"/><circle cx="11.5" cy="12" r="3.9" fill="none" stroke="#000" stroke-width="3.8" stroke-dasharray="1.7 1.35"/><circle cx="11.5" cy="12" r="3.9" fill="none" stroke="#f4f000" stroke-width="2.2" stroke-dasharray="1.2 1.85"/><circle cx="11.5" cy="12" r="2.6" fill="none" stroke="#f4f000" stroke-width="1.8"/><circle cx="11.5" cy="12" r="0.9" fill="#fff"/></svg>
<div class="t" style="left:122px;top:134px;letter-spacing:-0.129px;">Task Configuration</div>
<svg style="left:105px;top:156px" width="9" height="9" viewBox="0 0 9 9"><rect x="0.5" y="0.5" width="8" height="8" rx="1.2" fill="url(#gb)" stroke="#9fd0d8"/><path d="M2 4.5H7" stroke="#000" stroke-width="1.2"/></svg>
<svg style="left:120px;top:155px" width="14" height="13" viewBox="0 0 14 13"><g fill="none" stroke="#5ef000" stroke-width="2"><path d="M2.8 4.5Q3 1.2 6.5 1H8.5Q11 1.2 12 2.8"/><path d="M11.2 8.5Q11 11.8 7.5 12H5.5Q3 11.8 2 10.2"/></g><path d="M0 4H6.2L3.1 8.2Z" fill="#5ef000"/><path d="M14 9H7.8L10.9 4.8Z" fill="#5ef000"/></svg>
<svg style="left:137px;top:154px" width="16" height="16" viewBox="0 0 16 16"><path d="M1.3 5.3L10.5 0.6L15.5 4.6L6 9.6Z" fill="#fff" stroke="#000" stroke-width="1.1"/><path d="M1.3 7.6L6 12L15.5 7" fill="none" stroke="#000" stroke-width="1.1"/><path d="M1.3 9.8L6 14.2L15.5 9.2" fill="none" stroke="#000" stroke-width="1.1"/><path d="M7 -0.5H9.3V4.5H11.3L8.15 8L5 4.5H7Z" fill="#000090"/></svg>
<div class="t" style="left:157px;top:153px;letter-spacing:-0.114px;">MainTask</div>
<svg style="left:139px;top:171px" width="15" height="16" viewBox="0 0 15 16"><path d="M3.5 15V1.5H12.5L15.5 4.5V15" fill="#fff" stroke="#8a8a8a"/><path d="M15.5 4V15.5H3" stroke="#000" stroke-width="1.2" fill="none"/><path d="M12.5 1.5V4.5H15.5" stroke="#000" fill="#fff"/><path d="M10.5 7.5H14M10.5 9.5H14M10.5 11.5H14M6 13.5H14" stroke="#a0a0a0"/><rect x="5.5" y="3.3" width="4" height="4.2" fill="#fff" stroke="#a00000" stroke-width="1.2"/><rect x="5.5" y="7.5" width="4" height="4" fill="#fff" stroke="#0000a0" stroke-width="1.2"/><rect x="1.5" y="7.5" width="4" height="4" fill="#fff" stroke="#008000" stroke-width="1.2"/></svg>
<div class="t" style="left:161px;top:172px;transform:scaleX(0.878);transform-origin:0 0;">PLC_PRG</div>
<svg style="left:61px;top:193px" width="14" height="13" viewBox="0 0 14 13"><g fill="none" stroke="#5ef000" stroke-width="2"><path d="M2.8 4.5Q3 1.2 6.5 1H8.5Q11 1.2 12 2.8"/><path d="M11.2 8.5Q11 11.8 7.5 12H5.5Q3 11.8 2 10.2"/></g><path d="M0 4H6.2L3.1 8.2Z" fill="#5ef000"/><path d="M14 9H7.8L10.9 4.8Z" fill="#5ef000"/></svg>
<svg style="left:76px;top:191px" width="16" height="16" viewBox="0 0 16 16"><rect x="0.5" y="0.5" width="15" height="15" fill="#fff" stroke="#9a9a9a"/><path d="M3 15L15 3V15Z" fill="#e6e6e6"/><path d="M3 6V3H6M10 3H13V6M13 10V13H10M6 13H3V10" fill="none" stroke="#1060c0" stroke-width="1.3"/></svg>
<div class="t" style="left:97px;top:191px;letter-spacing:-0.067px;">ParameterEditor (Parameter Editor)</div>
<svg style="left:61px;top:212px" width="14" height="13" viewBox="0 0 14 13"><g fill="none" stroke="#5ef000" stroke-width="2"><path d="M2.8 4.5Q3 1.2 6.5 1H8.5Q11 1.2 12 2.8"/><path d="M11.2 8.5Q11 11.8 7.5 12H5.5Q3 11.8 2 10.2"/></g><path d="M0 4H6.2L3.1 8.2Z" fill="#5ef000"/><path d="M14 9H7.8L10.9 4.8Z" fill="#5ef000"/></svg>
<svg style="left:78px;top:212px" width="14" height="13" viewBox="0 0 14 13"><rect x="0.5" y="0.5" width="3" height="11" fill="#c0c0c0" stroke="#000" stroke-width="1"/><path d="M0 12.5H2" stroke="#000"/><path d="M5 6.5H12" stroke="#000" stroke-dasharray="1 1"/></svg>
<div class="t" style="left:97px;top:210px;letter-spacing:-0.15px;">Coupler_I_O_moduls (Coupler I/O moduls)</div>
<svg style="left:61px;top:231px" width="14" height="13" viewBox="0 0 14 13"><g fill="none" stroke="#5ef000" stroke-width="2"><path d="M2.8 4.5Q3 1.2 6.5 1H8.5Q11 1.2 12 2.8"/><path d="M11.2 8.5Q11 11.8 7.5 12H5.5Q3 11.8 2 10.2"/></g><path d="M0 4H6.2L3.1 8.2Z" fill="#5ef000"/><path d="M14 9H7.8L10.9 4.8Z" fill="#5ef000"/></svg>
<svg style="left:79px;top:230px" width="12" height="14" viewBox="0 0 12 14"><path d="M0.8 1.5C3 0.5 2 3 5 4.5S8 6 6.5 8" stroke="#0a1ee0" stroke-width="2.2" fill="none"/><path d="M3.5 10.5A3.5 2 0 0 1 10.5 10.5V12H3.5Z" fill="#fff" stroke="#000"/><ellipse cx="7" cy="12" rx="3.5" ry="0.9" fill="#000"/><path d="M6 9H8" stroke="#c8a000"/></svg>
<div class="t" style="left:97px;top:229px;letter-spacing:-0.267px;">AxesGroups</div>
<svg style="left:61px;top:250px" width="14" height="13" viewBox="0 0 14 13"><g fill="none" stroke="#5ef000" stroke-width="2"><path d="M2.8 4.5Q3 1.2 6.5 1H8.5Q11 1.2 12 2.8"/><path d="M11.2 8.5Q11 11.8 7.5 12H5.5Q3 11.8 2 10.2"/></g><path d="M0 4H6.2L3.1 8.2Z" fill="#5ef000"/><path d="M14 9H7.8L10.9 4.8Z" fill="#5ef000"/></svg>
<svg style="left:79px;top:249px" width="12" height="14" viewBox="0 0 12 14"><path d="M0.8 1.5C3 0.5 2 3 5 4.5S8 6 6.5 8" stroke="#0a1ee0" stroke-width="2.2" fill="none"/><path d="M3.5 10.5A3.5 2 0 0 1 10.5 10.5V12H3.5Z" fill="#fff" stroke="#000"/><ellipse cx="7" cy="12" rx="3.5" ry="0.9" fill="#000"/><path d="M6 9H8" stroke="#c8a000"/></svg>
<div class="t" style="left:97px;top:248px;letter-spacing:-0.14px;">VirtualAxes</div>
<svg style="left:25px;top:270px" width="9" height="9" viewBox="0 0 9 9"><rect x="0.5" y="0.5" width="8" height="8" rx="1.2" fill="url(#gb)" stroke="#9fd0d8"/><path d="M2 4.5H7" stroke="#000" stroke-width="1.2"/></svg>
<svg style="left:41px;top:268px" width="13" height="14" viewBox="0 0 13 14"><rect x="0.5" y="1.5" width="12" height="11" fill="#d4d4d4" stroke="#8a8a8a"/><rect x="1" y="2" width="1.2" height="10" fill="#fff"/><rect x="6" y="0.5" width="3" height="13" fill="#ececec"/><path d="M5.5 0.5V13.5M9.5 0.5V13.5" stroke="#7a7a7a"/><path d="M6.3 0.8L7.5 2.3L8.7 0.8" stroke="#7a7a7a" fill="none"/><path d="M6.3 13.5L7.5 12.2L8.7 13.5" stroke="#222" fill="none"/><rect x="0" y="12.2" width="14" height="1.5" fill="#000"/><rect x="12.6" y="1.5" width="1.2" height="12" fill="#000"/><circle cx="2.9" cy="4.2" r="0.9" fill="#000"/><circle cx="2.9" cy="6.3" r="0.9" fill="#000"/><circle cx="2.9" cy="8.4" r="0.9" fill="#000"/></svg>
<div class="t" style="left:61px;top:267px;letter-spacing:-0.043px;">Device (Controller c520)</div>
<svg style="left:45px;top:289px" width="9" height="9" viewBox="0 0 9 9"><rect x="0.5" y="0.5" width="8" height="8" rx="1.2" fill="url(#gb)" stroke="#9fd0d8"/><path d="M2 4.5H7" stroke="#000" stroke-width="1.2"/></svg>
<svg style="left:59px;top:286px" width="18" height="16" viewBox="0 0 18 16"><path d="M1.5 13.5V0.5H6.5L9.5 3.5V13.5Z" fill="#fff" stroke="#8a8a8a"/><path d="M9.5 3V13.5H1" stroke="#000" fill="none"/><rect x="1" y="13.5" width="10" height="1.3" fill="#000"/><path d="M6.5 0.5V3.5H9.5" stroke="#000" fill="none"/><path d="M3 4.5H6M3 6.5H7.5M3 8.5H7.5M3 10.5H7.5" stroke="#0000ff" stroke-width="1.2"/><path d="M12.5 2V13M16.5 2V13M13 1.5H16M13 13.5H16" stroke="#0000ff" fill="none"/><path d="M11 9.5H14L12.5 11.5Z" fill="#0000ff"/></svg>
<div class="t" style="left:81px;top:286px;transform:scaleX(0.9204);transform-origin:0 0;">PLC Logic</div>
<svg style="left:65px;top:308px" width="9" height="9" viewBox="0 0 9 9"><rect x="0.5" y="0.5" width="8" height="8" rx="1.2" fill="url(#gb)" stroke="#9fd0d8"/><path d="M2 4.5H7" stroke="#000" stroke-width="1.2"/></svg>
<svg style="left:80px;top:305px" width="16" height="16" viewBox="0 0 16 16"><circle cx="8" cy="8" r="6.6" fill="none" stroke="#9c9cd4" stroke-width="2.6" stroke-dasharray="2.2 1.3"/><circle cx="8" cy="8" r="4.6" fill="none" stroke="#9c9cd4" stroke-width="3.2"/><path d="M12.5 10A6 6 0 0 1 6 13.6" stroke="#6a6a90" stroke-width="1.2" fill="none" opacity="0.7"/></svg>
<div class="t" style="left:102px;top:305px;letter-spacing:-0.2px;">Application</div>
<svg style="left:100px;top:324px" width="16" height="16" viewBox="0 0 16 16"><circle cx="8" cy="8.3" r="7.2" fill="url(#gl)"/><path d="M2.5 5.5Q4 2 8 1.8Q9.5 3 8.5 4.5Q7 6.5 5 6Q3.5 7.5 2 8Z" fill="#2cb82c"/><path d="M11 3.5Q14 5 14.8 8Q14.5 11 12.5 12Q11 10 11.5 8Q10 6 11 3.5Z" fill="#0c8a1c"/><path d="M7.5 9.5Q9.5 9 10 11Q9.5 13 8.5 13.5Q7.5 12 7.5 9.5Z" fill="#109020"/><path d="M1.2 14.2Q0.5 12 4 8.5T12 2.2Q15 1 15.3 2.6" stroke="#a8ecff" stroke-width="1.3" fill="none"/><path d="M4.5 6.5L8.5 3" stroke="#e8ffff" stroke-width="1.1"/><path d="M15.3 2.6Q15.8 5 13 8" stroke="#40b8f0" stroke-width="1.1" fill="none"/><path d="M1.2 14.2Q2.5 15.8 6 14.5" stroke="#40b8f0" stroke-width="1.1" fill="none"/><path d="M8.5 9.5L14 14.5" stroke="#ff4010" stroke-width="2.2"/><path d="M7 8H11.5L7 12.5Z" fill="#ff4010"/></svg>
<div class="t" style="left:122px;top:324px;transform:scaleX(0.85);transform-origin:0 0;">NVL</div>
<svg style="left:100px;top:343px" width="16" height="16" viewBox="0 0 16 16"><path d="M0.5 4.5L3 1.5H6.5L4 4.5Z" fill="#00e0e8" stroke="#000"/><rect x="0.5" y="4.5" width="3.5" height="11" fill="#00e0e8" stroke="#000"/><rect x="4" y="5.5" width="4.5" height="10" fill="#e00000" stroke="#000"/><rect x="5" y="6" width="1.2" height="9" fill="#800000"/><path d="M8.5 5.5L11 3H15.5L13 5.5Z" fill="#ffff00" stroke="#000"/><rect x="8.5" y="5.5" width="4.5" height="10" fill="#ffff00" stroke="#000"/><path d="M13 5.5L15.5 3V13L13 15.5Z" fill="#c8c800" stroke="#000"/><rect x="9.5" y="6" width="1.3" height="9" fill="#a0a000"/></svg>
<div class="t" style="left:122px;top:343px;letter-spacing:-0.143px;">Library Manager</div>
<svg style="left:100px;top:361px" width="13" height="17" viewBox="0 0 13 17"><path d="M1.5 14.5V0.5H8.5L11.5 3.5V14.5Z" fill="#fff" stroke="#8a8a8a"/><path d="M11.5 3V14.5H1" stroke="#000" fill="none"/><rect x="1" y="14.5" width="12" height="1.3" fill="#000"/><path d="M8.5 0.5V3.5H11.5" stroke="#000" fill="none"/><path d="M3 4.5H6M3 6.5H9.5M3 8.5H9.5M3 10.5H9.5" stroke="#0000ff" stroke-width="1.2"/><path d="M3 12.5H9.5" stroke="#0000ff" stroke-width="1.2"/></svg>
<div class="t" style="left:122px;top:362px;transform:scaleX(0.8833);transform-origin:0 0;color:#8c8c8c;">PLC_PRG (PRG)</div>
<svg style="left:85px;top:384px" width="9" height="9" viewBox="0 0 9 9"><rect x="0.5" y="0.5" width="8" height="8" rx="1.2" fill="url(#gb)" stroke="#9fd0d8"/><path d="M2 4.5H7" stroke="#000" stroke-width="1.2"/></svg>
<svg style="left:100px;top:381px" width="16" height="16" viewBox="0 0 16 16"><path d="M1.5 15.5V4.5L4 2H16.5V14" fill="#ececec" stroke="#8a8a8a"/><path d="M4 2.5H16M7.5 4.5L10 2M11.5 4.5L14 2M1.5 4.5H15" stroke="#9a9a9a" fill="none"/><rect x="2" y="5" width="5.5" height="10.5" fill="#fafafa"/><rect x="3.5" y="7" width="3.5" height="8" fill="#d0d0d0"/><rect x="15" y="3" width="1.5" height="11" fill="#a8a8a8"/><path d="M7.5 4.5V15.5M11.5 4.5V12" stroke="#8a8a8a"/><rect x="4" y="7" width="2.5" height="1.8" fill="#00c000"/><rect x="9" y="7" width="2" height="1.2" fill="#a00000"/><rect x="13" y="7" width="2" height="1.2" fill="#a00000"/><rect x="2" y="15.3" width="8" height="1.4" fill="#000"/><rect x="4" y="12.5" width="2" height="2" fill="#000"/><circle cx="11.5" cy="12" r="3.9" fill="none" stroke="#000" stroke-width="3.8" stroke-dasharray="1.7 1.35"/><circle cx="11.5" cy="12" r="3.9" fill="none" stroke="#f4f000" stroke-width="2.2" stroke-dasharray="1.2 1.85"/><circle cx="11.5" cy="12" r="2.6" fill="none" stroke="#f4f000" stroke-width="1.8"/><circle cx="11.5" cy="12" r="0.9" fill="#fff"/></svg>
<div class="t" style="left:122px;top:381px;letter-spacing:-0.129px;">Task Configuration</div>
<svg style="left:105px;top:403px" width="9" height="9" viewBox="0 0 9 9"><rect x="0.5" y="0.5" width="8" height="8" rx="1.2" fill="url(#gb)" stroke="#9fd0d8"/><path d="M2 4.5H7" stroke="#000" stroke-width="1.2"/></svg>
<svg style="left:120px;top:401px" width="16" height="16" viewBox="0 0 16 16"><path d="M1.3 5.3L10.5 0.6L15.5 4.6L6 9.6Z" fill="#fff" stroke="#000" stroke-width="1.1"/><path d="M1.3 7.6L6 12L15.5 7" fill="none" stroke="#000" stroke-width="1.1"/><path d="M1.3 9.8L6 14.2L15.5 9.2" fill="none" stroke="#000" stroke-width="1.1"/><path d="M7 -0.5H9.3V4.5H11.3L8.15 8L5 4.5H7Z" fill="#000090"/></svg>
<div class="t" style="left:141px;top:400px;letter-spacing:-0.114px;">MainTask</div>
<svg style="left:139px;top:418px" width="15" height="16" viewBox="0 0 15 16"><path d="M3.5 15V1.5H12.5L15.5 4.5V15" fill="#fff" stroke="#8a8a8a"/><path d="M15.5 4V15.5H3" stroke="#000" stroke-width="1.2" fill="none"/><path d="M12.5 1.5V4.5H15.5" stroke="#000" fill="#fff"/><path d="M10.5 7.5H14M10.5 9.5H14M10.5 11.5H14M6 13.5H14" stroke="#a0a0a0"/><rect x="5.5" y="3.3" width="4" height="4.2" fill="#fff" stroke="#a00000" stroke-width="1.2"/><rect x="5.5" y="7.5" width="4" height="4" fill="#fff" stroke="#0000a0" stroke-width="1.2"/><rect x="1.5" y="7.5" width="4" height="4" fill="#fff" stroke="#008000" stroke-width="1.2"/></svg>
<div class="t" style="left:161px;top:419px;transform:scaleX(0.878);transform-origin:0 0;">PLC_PRG</div>
<svg style="left:60px;top:438px" width="16" height="16" viewBox="0 0 16 16"><rect x="0.5" y="0.5" width="15" height="15" fill="#fff" stroke="#9a9a9a"/><path d="M3 15L15 3V15Z" fill="#e6e6e6"/><path d="M3 6V3H6M10 3H13V6M13 10V13H10M6 13H3V10" fill="none" stroke="#1060c0" stroke-width="1.3"/></svg>
<div class="t" style="left:81px;top:438px;letter-spacing:-0.067px;">ParameterEditor (Parameter Editor)</div>
<svg style="left:60px;top:457px" width="16" height="16" viewBox="0 0 16 16"><rect x="0.5" y="0.5" width="15" height="15" fill="#fff" stroke="#9a9a9a"/><path d="M3 15L15 3V15Z" fill="#e6e6e6"/><path d="M3 6V3H6M10 3H13V6M13 10V13H10M6 13H3V10" fill="none" stroke="#1060c0" stroke-width="1.3"/></svg>
<div class="t" style="left:81px;top:457px;letter-spacing:-0.15px;">FAST_System_Configuration (FAST System Configuration)</div>
<svg style="left:60px;top:476px" width="16" height="16" viewBox="0 0 16 16"><rect x="0.5" y="0.5" width="15" height="15" fill="#fff" stroke="#9a9a9a"/><path d="M3 15L15 3V15Z" fill="#e6e6e6"/><path d="M3 6V3H6M10 3H13V6M13 10V13H10M6 13H3V10" fill="none" stroke="#1060c0" stroke-width="1.3"/></svg>
<div class="t" style="left:81px;top:476px;transform:scaleX(0.946);transform-origin:0 0;">FAST_System_Diagnosis (FAST System Diagnosis)</div>
<svg style="left:61px;top:497px" width="14" height="13" viewBox="0 0 14 13"><rect x="0.5" y="0.5" width="3" height="11" fill="#c0c0c0" stroke="#000" stroke-width="1"/><path d="M0 12.5H2" stroke="#000"/><path d="M5 6.5H12" stroke="#000" stroke-dasharray="1 1"/></svg>
<div class="t" style="left:81px;top:495px;letter-spacing:-0.15px;">Coupler_I_O_moduls (Coupler I/O moduls)</div>
<svg style="left:63px;top:515px" width="12" height="14" viewBox="0 0 12 14"><path d="M0.8 1.5C3 0.5 2 3 5 4.5S8 6 6.5 8" stroke="#0a1ee0" stroke-width="2.2" fill="none"/><path d="M3.5 10.5A3.5 2 0 0 1 10.5 10.5V12H3.5Z" fill="#fff" stroke="#000"/><ellipse cx="7" cy="12" rx="3.5" ry="0.9" fill="#000"/><path d="M6 9H8" stroke="#c8a000"/></svg>
<div class="t" style="left:81px;top:514px;letter-spacing:-0.267px;">AxesGroups</div>
<svg style="left:63px;top:534px" width="12" height="14" viewBox="0 0 12 14"><path d="M0.8 1.5C3 0.5 2 3 5 4.5S8 6 6.5 8" stroke="#0a1ee0" stroke-width="2.2" fill="none"/><path d="M3.5 10.5A3.5 2 0 0 1 10.5 10.5V12H3.5Z" fill="#fff" stroke="#000"/><ellipse cx="7" cy="12" rx="3.5" ry="0.9" fill="#000"/><path d="M6 9H8" stroke="#c8a000"/></svg>
<div class="t" style="left:81px;top:533px;letter-spacing:-0.14px;">VirtualAxes</div>
<svg style="left:158px;top:98px" width="182" height="16" viewBox="0 0 182 16"><g opacity="0.25" transform="translate(1.5,2)"><path d="M3 5.5L162 8.2" stroke="#000" stroke-width="3"/><path d="M161 2.5L178 8.5L161 13.5Z" fill="#000"/></g><path d="M3 5.5L162 8.2" stroke="#0b6e0b" stroke-width="3"/><path d="M161 2.5L177.5 8.3L161 13.5Z" fill="#0b6e0b"/></svg>
</div>
<div class="a" style="left:357px;top:97px;width:807px;height:414px;background:#f0f0f0;border-left:1px solid #828282;border-top:1px solid #a0a0a0"></div>
<svg style="left:357px;top:97px" width="807" height="23" viewBox="0 0 807 23"><rect x="0" y="0" width="807" height="1" fill="#a0a0a0"/><path d="M0 20.5H807" stroke="#a0a0a0"/><path d="M2.5 20.5L20.5 3.5Q22 3 24 3.5H82Q85.5 3.5 85.5 7V20.5" fill="#fff" stroke="#9a9a9a"/><path d="M3.5 21H85" stroke="#fff" stroke-width="1"/></svg>
<svg style="left:377px;top:102px" width="16" height="16" viewBox="0 0 16 16"><circle cx="8" cy="8.3" r="7.2" fill="url(#gl)"/><path d="M2.5 5.5Q4 2 8 1.8Q9.5 3 8.5 4.5Q7 6.5 5 6Q3.5 7.5 2 8Z" fill="#2cb82c"/><path d="M11 3.5Q14 5 14.8 8Q14.5 11 12.5 12Q11 10 11.5 8Q10 6 11 3.5Z" fill="#0c8a1c"/><path d="M7.5 9.5Q9.5 9 10 11Q9.5 13 8.5 13.5Q7.5 12 7.5 9.5Z" fill="#109020"/><path d="M1.2 14.2Q0.5 12 4 8.5T12 2.2Q15 1 15.3 2.6" stroke="#a8ecff" stroke-width="1.3" fill="none"/><path d="M4.5 6.5L8.5 3" stroke="#e8ffff" stroke-width="1.1"/><path d="M15.3 2.6Q15.8 5 13 8" stroke="#40b8f0" stroke-width="1.1" fill="none"/><path d="M1.2 14.2Q2.5 15.8 6 14.5" stroke="#40b8f0" stroke-width="1.1" fill="none"/><path d="M8.5 9.5L14 14.5" stroke="#ff4010" stroke-width="2.2"/><path d="M7 8H11.5L7 12.5Z" fill="#ff4010"/></svg>
<div class="t" style="left:400px;top:100px;font-size:11px;line-height:19px;font-weight:bold;letter-spacing:0.1px">NVL</div>
<svg style="left:429px;top:106px" width="10" height="8" viewBox="0 0 10 8"><path d="M1.5 0.8L8.5 7.2M8.5 0.8L1.5 7.2" stroke="#000" stroke-width="2.2"/></svg>
<div class="a" style="left:358px;top:120px;width:806px;height:25px;background:#6b6b6b"></div>
<div class="t" style="left:378px;top:124px;font-size:11.5px;line-height:21px;font-weight:bold;color:#f2f2f2">Controller_3200C.Application.NVL</div>
<div class="a" style="left:358px;top:145px;width:806px;height:365px;background:#fff"></div>
<div class="a" style="left:358px;top:145px;width:806px;height:365px;overflow:hidden;background:#fff">
<div class="a" style="left:273px;top:1px;width:1px;height:23px;background:#e3e3e3"></div>
<div class="a" style="left:531px;top:1px;width:1px;height:23px;background:#e3e3e3"></div>
<div class="a" style="left:631px;top:1px;width:1px;height:23px;background:#e3e3e3"></div>
<div class="a" style="left:750px;top:1px;width:1px;height:23px;background:#e3e3e3"></div>
<div class="a" style="left:274px;top:25px;width:1px;height:340px;background:#e3e3e3"></div>
<div class="a" style="left:531px;top:25px;width:1px;height:340px;background:#e3e3e3"></div>
<div class="a" style="left:631px;top:25px;width:1px;height:340px;background:#e3e3e3"></div>
<div class="a" style="left:750px;top:25px;width:1px;height:340px;background:#e3e3e3"></div>
<div class="t" style="left:8px;top:3px;font-size:11.3px;line-height:19px;transform:scaleX(1.0315);transform-origin:0 0;">Expression</div>
<div class="t" style="left:280px;top:3px;font-size:11.3px;line-height:19px;transform:scaleX(0.9333);transform-origin:0 0;">Type</div>
<div class="t" style="left:537px;top:3px;font-size:11.3px;line-height:19px;transform:scaleX(0.9679);transform-origin:0 0;">Value</div>
<div class="t" style="left:637px;top:3px;font-size:11.3px;line-height:19px;transform:scaleX(1.0280);transform-origin:0 0;">Prepared value</div>
<div class="t" style="left:757px;top:3px;font-size:11.3px;line-height:19px;transform:scaleX(1.0024);transform-origin:0 0;">Address</div>
<div class="a" style="left:1px;top:44px;width:805px;height:1px;background:#e3e3e3"></div>
<svg style="left:7px;top:29px" width="9" height="9" viewBox="0 0 9 9"><rect x="0.5" y="0.5" width="8" height="8" rx="1.2" fill="url(#gb)" stroke="#9fd0d8"/><path d="M2 4.5H7" stroke="#000" stroke-width="1.2"/></svg>
<svg style="left:24px;top:26px" width="16" height="16" viewBox="0 0 16 16"><circle cx="8" cy="8.3" r="7.2" fill="url(#gl)"/><path d="M2.5 5.5Q4 2 8 1.8Q9.5 3 8.5 4.5Q7 6.5 5 6Q3.5 7.5 2 8Z" fill="#2cb82c"/><path d="M11 3.5Q14 5 14.8 8Q14.5 11 12.5 12Q11 10 11.5 8Q10 6 11 3.5Z" fill="#0c8a1c"/><path d="M7.5 9.5Q9.5 9 10 11Q9.5 13 8.5 13.5Q7.5 12 7.5 9.5Z" fill="#109020"/><path d="M1.2 14.2Q0.5 12 4 8.5T12 2.2Q15 1 15.3 2.6" stroke="#a8ecff" stroke-width="1.3" fill="none"/><path d="M4.5 6.5L8.5 3" stroke="#e8ffff" stroke-width="1.1"/><path d="M15.3 2.6Q15.8 5 13 8" stroke="#40b8f0" stroke-width="1.1" fill="none"/><path d="M1.2 14.2Q2.5 15.8 6 14.5" stroke="#40b8f0" stroke-width="1.1" fill="none"/></svg>
<div class="t" style="left:46px;top:25px;transform:scaleX(1.0219);transform-origin:0 0;">NetVarTxDiag_UDP</div>
<div class="t" style="left:278px;top:26px;transform:scaleX(0.9241);transform-origin:0 0;">ARRAY [0..0] OF NETVARUDPDIAGSTRUCT</div>
<div class="a" style="left:1px;top:63px;width:805px;height:1px;background:#e3e3e3"></div>
<svg style="left:44px;top:45px" width="16" height="16" viewBox="0 0 16 16"><circle cx="8" cy="8.3" r="7.2" fill="url(#gl)"/><path d="M2.5 5.5Q4 2 8 1.8Q9.5 3 8.5 4.5Q7 6.5 5 6Q3.5 7.5 2 8Z" fill="#2cb82c"/><path d="M11 3.5Q14 5 14.8 8Q14.5 11 12.5 12Q11 10 11.5 8Q10 6 11 3.5Z" fill="#0c8a1c"/><path d="M7.5 9.5Q9.5 9 10 11Q9.5 13 8.5 13.5Q7.5 12 7.5 9.5Z" fill="#109020"/><path d="M1.2 14.2Q0.5 12 4 8.5T12 2.2Q15 1 15.3 2.6" stroke="#a8ecff" stroke-width="1.3" fill="none"/><path d="M4.5 6.5L8.5 3" stroke="#e8ffff" stroke-width="1.1"/><path d="M15.3 2.6Q15.8 5 13 8" stroke="#40b8f0" stroke-width="1.1" fill="none"/><path d="M1.2 14.2Q2.5 15.8 6 14.5" stroke="#40b8f0" stroke-width="1.1" fill="none"/></svg>
<div class="t" style="left:65px;top:44px;transform:scaleX(1.0398);transform-origin:0 0;">NetVarTxDiag_UDP[0]</div>
<div class="a" style="left:1px;top:82px;width:805px;height:1px;background:#e3e3e3"></div>
<svg style="left:7px;top:67px" width="9" height="9" viewBox="0 0 9 9"><rect x="0.5" y="0.5" width="8" height="8" rx="1.2" fill="url(#gb)" stroke="#9fd0d8"/><path d="M2 4.5H7" stroke="#000" stroke-width="1.2"/></svg>
<svg style="left:24px;top:64px" width="16" height="16" viewBox="0 0 16 16"><circle cx="8" cy="8.3" r="7.2" fill="url(#gl)"/><path d="M2.5 5.5Q4 2 8 1.8Q9.5 3 8.5 4.5Q7 6.5 5 6Q3.5 7.5 2 8Z" fill="#2cb82c"/><path d="M11 3.5Q14 5 14.8 8Q14.5 11 12.5 12Q11 10 11.5 8Q10 6 11 3.5Z" fill="#0c8a1c"/><path d="M7.5 9.5Q9.5 9 10 11Q9.5 13 8.5 13.5Q7.5 12 7.5 9.5Z" fill="#109020"/><path d="M1.2 14.2Q0.5 12 4 8.5T12 2.2Q15 1 15.3 2.6" stroke="#a8ecff" stroke-width="1.3" fill="none"/><path d="M4.5 6.5L8.5 3" stroke="#e8ffff" stroke-width="1.1"/><path d="M15.3 2.6Q15.8 5 13 8" stroke="#40b8f0" stroke-width="1.1" fill="none"/><path d="M1.2 14.2Q2.5 15.8 6 14.5" stroke="#40b8f0" stroke-width="1.1" fill="none"/></svg>
<div class="t" style="left:46px;top:63px;transform:scaleX(1.0175);transform-origin:0 0;">NetVarRxDiag_UDP</div>
<div class="t" style="left:278px;top:64px;transform:scaleX(0.9241);transform-origin:0 0;">ARRAY [0..0] OF NETVARUDPDIAGSTRUCT</div>
<div class="a" style="left:1px;top:101px;width:805px;height:1px;background:#e3e3e3"></div>
<svg style="left:44px;top:83px" width="16" height="16" viewBox="0 0 16 16"><circle cx="8" cy="8.3" r="7.2" fill="url(#gl)"/><path d="M2.5 5.5Q4 2 8 1.8Q9.5 3 8.5 4.5Q7 6.5 5 6Q3.5 7.5 2 8Z" fill="#2cb82c"/><path d="M11 3.5Q14 5 14.8 8Q14.5 11 12.5 12Q11 10 11.5 8Q10 6 11 3.5Z" fill="#0c8a1c"/><path d="M7.5 9.5Q9.5 9 10 11Q9.5 13 8.5 13.5Q7.5 12 7.5 9.5Z" fill="#109020"/><path d="M1.2 14.2Q0.5 12 4 8.5T12 2.2Q15 1 15.3 2.6" stroke="#a8ecff" stroke-width="1.3" fill="none"/><path d="M4.5 6.5L8.5 3" stroke="#e8ffff" stroke-width="1.1"/><path d="M15.3 2.6Q15.8 5 13 8" stroke="#40b8f0" stroke-width="1.1" fill="none"/><path d="M1.2 14.2Q2.5 15.8 6 14.5" stroke="#40b8f0" stroke-width="1.1" fill="none"/></svg>
<div class="t" style="left:65px;top:82px;transform:scaleX(1.0358);transform-origin:0 0;">NetVarRxDiag_UDP[0]</div>
<div class="a" style="left:1px;top:120px;width:805px;height:1px;background:#e3e3e3"></div>
<svg style="left:7px;top:105px" width="9" height="9" viewBox="0 0 9 9"><rect x="0.5" y="0.5" width="8" height="8" rx="1.2" fill="url(#gb)" stroke="#9fd0d8"/><path d="M2 4.5H7" stroke="#000" stroke-width="1.2"/></svg>
<svg style="left:24px;top:102px" width="16" height="16" viewBox="0 0 16 16"><circle cx="8" cy="8.3" r="7.2" fill="url(#gl)"/><path d="M2.5 5.5Q4 2 8 1.8Q9.5 3 8.5 4.5Q7 6.5 5 6Q3.5 7.5 2 8Z" fill="#2cb82c"/><path d="M11 3.5Q14 5 14.8 8Q14.5 11 12.5 12Q11 10 11.5 8Q10 6 11 3.5Z" fill="#0c8a1c"/><path d="M7.5 9.5Q9.5 9 10 11Q9.5 13 8.5 13.5Q7.5 12 7.5 9.5Z" fill="#109020"/><path d="M1.2 14.2Q0.5 12 4 8.5T12 2.2Q15 1 15.3 2.6" stroke="#a8ecff" stroke-width="1.3" fill="none"/><path d="M4.5 6.5L8.5 3" stroke="#e8ffff" stroke-width="1.1"/><path d="M15.3 2.6Q15.8 5 13 8" stroke="#40b8f0" stroke-width="1.1" fill="none"/><path d="M1.2 14.2Q2.5 15.8 6 14.5" stroke="#40b8f0" stroke-width="1.1" fill="none"/></svg>
<div class="t" style="left:46px;top:101px;transform:scaleX(0.9371);transform-origin:0 0;">TxPDOs_UDP</div>
<div class="t" style="left:278px;top:102px;transform:scaleX(0.9312);transform-origin:0 0;">ARRAY [0..0] OF NETVARPDO_TX_UDP</div>
<div class="a" style="left:1px;top:139px;width:805px;height:1px;background:#e3e3e3"></div>
<svg style="left:44px;top:121px" width="16" height="16" viewBox="0 0 16 16"><circle cx="8" cy="8.3" r="7.2" fill="url(#gl)"/><path d="M2.5 5.5Q4 2 8 1.8Q9.5 3 8.5 4.5Q7 6.5 5 6Q3.5 7.5 2 8Z" fill="#2cb82c"/><path d="M11 3.5Q14 5 14.8 8Q14.5 11 12.5 12Q11 10 11.5 8Q10 6 11 3.5Z" fill="#0c8a1c"/><path d="M7.5 9.5Q9.5 9 10 11Q9.5 13 8.5 13.5Q7.5 12 7.5 9.5Z" fill="#109020"/><path d="M1.2 14.2Q0.5 12 4 8.5T12 2.2Q15 1 15.3 2.6" stroke="#a8ecff" stroke-width="1.3" fill="none"/><path d="M4.5 6.5L8.5 3" stroke="#e8ffff" stroke-width="1.1"/><path d="M15.3 2.6Q15.8 5 13 8" stroke="#40b8f0" stroke-width="1.1" fill="none"/><path d="M1.2 14.2Q2.5 15.8 6 14.5" stroke="#40b8f0" stroke-width="1.1" fill="none"/></svg>
<div class="t" style="left:65px;top:120px;transform:scaleX(0.9683);transform-origin:0 0;">TxPDOs_UDP[0]</div>
<div class="a" style="left:1px;top:158px;width:805px;height:1px;background:#e3e3e3"></div>
<svg style="left:7px;top:143px" width="9" height="9" viewBox="0 0 9 9"><rect x="0.5" y="0.5" width="8" height="8" rx="1.2" fill="url(#gb)" stroke="#9fd0d8"/><path d="M2 4.5H7" stroke="#000" stroke-width="1.2"/></svg>
<svg style="left:24px;top:140px" width="16" height="16" viewBox="0 0 16 16"><circle cx="8" cy="8.3" r="7.2" fill="url(#gl)"/><path d="M2.5 5.5Q4 2 8 1.8Q9.5 3 8.5 4.5Q7 6.5 5 6Q3.5 7.5 2 8Z" fill="#2cb82c"/><path d="M11 3.5Q14 5 14.8 8Q14.5 11 12.5 12Q11 10 11.5 8Q10 6 11 3.5Z" fill="#0c8a1c"/><path d="M7.5 9.5Q9.5 9 10 11Q9.5 13 8.5 13.5Q7.5 12 7.5 9.5Z" fill="#109020"/><path d="M1.2 14.2Q0.5 12 4 8.5T12 2.2Q15 1 15.3 2.6" stroke="#a8ecff" stroke-width="1.3" fill="none"/><path d="M4.5 6.5L8.5 3" stroke="#e8ffff" stroke-width="1.1"/><path d="M15.3 2.6Q15.8 5 13 8" stroke="#40b8f0" stroke-width="1.1" fill="none"/><path d="M1.2 14.2Q2.5 15.8 6 14.5" stroke="#40b8f0" stroke-width="1.1" fill="none"/></svg>
<div class="t" style="left:46px;top:139px;transform:scaleX(0.9507);transform-origin:0 0;">RxPDOs_UDP</div>
<div class="t" style="left:278px;top:140px;transform:scaleX(0.9270);transform-origin:0 0;">ARRAY [0..0] OF NETVARPDO_RX_UDP</div>
<div class="a" style="left:1px;top:177px;width:805px;height:1px;background:#e3e3e3"></div>
<svg style="left:44px;top:159px" width="16" height="16" viewBox="0 0 16 16"><circle cx="8" cy="8.3" r="7.2" fill="url(#gl)"/><path d="M2.5 5.5Q4 2 8 1.8Q9.5 3 8.5 4.5Q7 6.5 5 6Q3.5 7.5 2 8Z" fill="#2cb82c"/><path d="M11 3.5Q14 5 14.8 8Q14.5 11 12.5 12Q11 10 11.5 8Q10 6 11 3.5Z" fill="#0c8a1c"/><path d="M7.5 9.5Q9.5 9 10 11Q9.5 13 8.5 13.5Q7.5 12 7.5 9.5Z" fill="#109020"/><path d="M1.2 14.2Q0.5 12 4 8.5T12 2.2Q15 1 15.3 2.6" stroke="#a8ecff" stroke-width="1.3" fill="none"/><path d="M4.5 6.5L8.5 3" stroke="#e8ffff" stroke-width="1.1"/><path d="M15.3 2.6Q15.8 5 13 8" stroke="#40b8f0" stroke-width="1.1" fill="none"/><path d="M1.2 14.2Q2.5 15.8 6 14.5" stroke="#40b8f0" stroke-width="1.1" fill="none"/></svg>
<div class="t" style="left:65px;top:158px;transform:scaleX(0.9735);transform-origin:0 0;">RxPDOs_UDP[0]</div>
<div class="a" style="left:1px;top:196px;width:805px;height:1px;background:#e3e3e3"></div>
<svg style="left:7px;top:181px" width="9" height="9" viewBox="0 0 9 9"><rect x="0.5" y="0.5" width="8" height="8" rx="1.2" fill="url(#gb)" stroke="#9fd0d8"/><path d="M2 4.5H7" stroke="#000" stroke-width="1.2"/></svg>
<svg style="left:24px;top:178px" width="16" height="16" viewBox="0 0 16 16"><circle cx="8" cy="8.3" r="7.2" fill="url(#gl)"/><path d="M2.5 5.5Q4 2 8 1.8Q9.5 3 8.5 4.5Q7 6.5 5 6Q3.5 7.5 2 8Z" fill="#2cb82c"/><path d="M11 3.5Q14 5 14.8 8Q14.5 11 12.5 12Q11 10 11.5 8Q10 6 11 3.5Z" fill="#0c8a1c"/><path d="M7.5 9.5Q9.5 9 10 11Q9.5 13 8.5 13.5Q7.5 12 7.5 9.5Z" fill="#109020"/><path d="M1.2 14.2Q0.5 12 4 8.5T12 2.2Q15 1 15.3 2.6" stroke="#a8ecff" stroke-width="1.3" fill="none"/><path d="M4.5 6.5L8.5 3" stroke="#e8ffff" stroke-width="1.1"/><path d="M15.3 2.6Q15.8 5 13 8" stroke="#40b8f0" stroke-width="1.1" fill="none"/><path d="M1.2 14.2Q2.5 15.8 6 14.5" stroke="#40b8f0" stroke-width="1.1" fill="none"/></svg>
<div class="t" style="left:46px;top:177px;transform:scaleX(1.0076);transform-origin:0 0;">NetVarManager_UDP_MainTask_0</div>
<div class="t" style="left:278px;top:178px;transform:scaleX(0.8939);transform-origin:0 0;">NETVARMANAGER_UDP_FB</div>
<div class="a" style="left:1px;top:215px;width:805px;height:1px;background:#e3e3e3"></div>
<svg style="left:50px;top:200px" width="9" height="12" viewBox="0 0 9 12"><path d="M4.5 0.3L8.7 4.3V8L4.5 11.8L0.3 7.8V4.3Z" fill="#1a1a1a"/><path d="M4.5 1L8 4.3L4.5 7.4L1 4.3Z" fill="#d8e4ff"/><path d="M4.5 1.6L5.4 2.5L4.5 3.4L3.6 2.5ZM2.7 3.4L3.6 4.3L2.7 5.2L1.8 4.3ZM6.3 3.4L7.2 4.3L6.3 5.2L5.4 4.3ZM4.5 5.2L5.4 6.1L4.5 7L3.6 6.1ZM4.5 3.4L5.4 4.3L4.5 5.2L3.6 4.3Z" fill="#1a1aff"/><path d="M1 4.9L4.1 7.8V10.8L1 8Z" fill="#b8cce8"/><path d="M5 7.8L8 5V7.6L5 10.4Z" fill="#707070"/></svg>
<div class="t" style="left:65px;top:196px;transform:scaleX(0.9936);transform-origin:0 0;">hSoketRx</div>
<div class="a" style="left:1px;top:234px;width:805px;height:1px;background:#e3e3e3"></div>
<svg style="left:50px;top:219px" width="9" height="12" viewBox="0 0 9 12"><path d="M4.5 0.3L8.7 4.3V8L4.5 11.8L0.3 7.8V4.3Z" fill="#1a1a1a"/><path d="M4.5 1L8 4.3L4.5 7.4L1 4.3Z" fill="#d8e4ff"/><path d="M4.5 1.6L5.4 2.5L4.5 3.4L3.6 2.5ZM2.7 3.4L3.6 4.3L2.7 5.2L1.8 4.3ZM6.3 3.4L7.2 4.3L6.3 5.2L5.4 4.3ZM4.5 5.2L5.4 6.1L4.5 7L3.6 6.1ZM4.5 3.4L5.4 4.3L4.5 5.2L3.6 4.3Z" fill="#1a1aff"/><path d="M1 4.9L4.1 7.8V10.8L1 8Z" fill="#b8cce8"/><path d="M5 7.8L8 5V7.6L5 10.4Z" fill="#707070"/></svg>
<div class="t" style="left:65px;top:215px;transform:scaleX(1.0178);transform-origin:0 0;">hSoketTx</div>
<div class="a" style="left:1px;top:253px;width:805px;height:1px;background:#e3e3e3"></div>
<svg style="left:50px;top:238px" width="9" height="12" viewBox="0 0 9 12"><path d="M4.5 0.3L8.7 4.3V8L4.5 11.8L0.3 7.8V4.3Z" fill="#1a1a1a"/><path d="M4.5 1L8 4.3L4.5 7.4L1 4.3Z" fill="#d8e4ff"/><path d="M4.5 1.6L5.4 2.5L4.5 3.4L3.6 2.5ZM2.7 3.4L3.6 4.3L2.7 5.2L1.8 4.3ZM6.3 3.4L7.2 4.3L6.3 5.2L5.4 4.3ZM4.5 5.2L5.4 6.1L4.5 7L3.6 6.1ZM4.5 3.4L5.4 4.3L4.5 5.2L3.6 4.3Z" fill="#1a1aff"/><path d="M1 4.9L4.1 7.8V10.8L1 8Z" fill="#b8cce8"/><path d="M5 7.8L8 5V7.6L5 10.4Z" fill="#707070"/></svg>
<div class="t" style="left:65px;top:234px;transform:scaleX(0.9725);transform-origin:0 0;">diRxLen</div>
<div class="a" style="left:1px;top:272px;width:805px;height:1px;background:#e3e3e3"></div>
<svg style="left:50px;top:257px" width="9" height="12" viewBox="0 0 9 12"><path d="M4.5 0.3L8.7 4.3V8L4.5 11.8L0.3 7.8V4.3Z" fill="#1a1a1a"/><path d="M4.5 1L8 4.3L4.5 7.4L1 4.3Z" fill="#d8e4ff"/><path d="M4.5 1.6L5.4 2.5L4.5 3.4L3.6 2.5ZM2.7 3.4L3.6 4.3L2.7 5.2L1.8 4.3ZM6.3 3.4L7.2 4.3L6.3 5.2L5.4 4.3ZM4.5 5.2L5.4 6.1L4.5 7L3.6 6.1ZM4.5 3.4L5.4 4.3L4.5 5.2L3.6 4.3Z" fill="#1a1aff"/><path d="M1 4.9L4.1 7.8V10.8L1 8Z" fill="#b8cce8"/><path d="M5 7.8L8 5V7.6L5 10.4Z" fill="#707070"/></svg>
<div class="t" style="left:65px;top:253px;transform:scaleX(1.0684);transform-origin:0 0;">diOffset</div>
<div class="a" style="left:1px;top:291px;width:805px;height:1px;background:#e3e3e3"></div>
<svg style="left:50px;top:276px" width="9" height="12" viewBox="0 0 9 12"><path d="M4.5 0.3L8.7 4.3V8L4.5 11.8L0.3 7.8V4.3Z" fill="#1a1a1a"/><path d="M4.5 1L8 4.3L4.5 7.4L1 4.3Z" fill="#d8e4ff"/><path d="M4.5 1.6L5.4 2.5L4.5 3.4L3.6 2.5ZM2.7 3.4L3.6 4.3L2.7 5.2L1.8 4.3ZM6.3 3.4L7.2 4.3L6.3 5.2L5.4 4.3ZM4.5 5.2L5.4 6.1L4.5 7L3.6 6.1ZM4.5 3.4L5.4 4.3L4.5 5.2L3.6 4.3Z" fill="#1a1aff"/><path d="M1 4.9L4.1 7.8V10.8L1 8Z" fill="#b8cce8"/><path d="M5 7.8L8 5V7.6L5 10.4Z" fill="#707070"/></svg>
<div class="t" style="left:65px;top:272px;transform:scaleX(1.0045);transform-origin:0 0;">diCallCounter</div>
<div class="a" style="left:1px;top:310px;width:805px;height:1px;background:#e3e3e3"></div>
<svg style="left:50px;top:295px" width="9" height="12" viewBox="0 0 9 12"><path d="M4.5 0.3L8.7 4.3V8L4.5 11.8L0.3 7.8V4.3Z" fill="#1a1a1a"/><path d="M4.5 1L8 4.3L4.5 7.4L1 4.3Z" fill="#d8e4ff"/><path d="M4.5 1.6L5.4 2.5L4.5 3.4L3.6 2.5ZM2.7 3.4L3.6 4.3L2.7 5.2L1.8 4.3ZM6.3 3.4L7.2 4.3L6.3 5.2L5.4 4.3ZM4.5 5.2L5.4 6.1L4.5 7L3.6 6.1ZM4.5 3.4L5.4 4.3L4.5 5.2L3.6 4.3Z" fill="#1a1aff"/><path d="M1 4.9L4.1 7.8V10.8L1 8Z" fill="#b8cce8"/><path d="M5 7.8L8 5V7.6L5 10.4Z" fill="#707070"/></svg>
<div class="t" style="left:65px;top:291px;transform:scaleX(1.0191);transform-origin:0 0;">diMsgCounter</div>
<div class="a" style="left:1px;top:329px;width:805px;height:1px;background:#e3e3e3"></div>
<svg style="left:50px;top:314px" width="9" height="12" viewBox="0 0 9 12"><path d="M4.5 0.3L8.7 4.3V8L4.5 11.8L0.3 7.8V4.3Z" fill="#1a1a1a"/><path d="M4.5 1L8 4.3L4.5 7.4L1 4.3Z" fill="#d8e4ff"/><path d="M4.5 1.6L5.4 2.5L4.5 3.4L3.6 2.5ZM2.7 3.4L3.6 4.3L2.7 5.2L1.8 4.3ZM6.3 3.4L7.2 4.3L6.3 5.2L5.4 4.3ZM4.5 5.2L5.4 6.1L4.5 7L3.6 6.1ZM4.5 3.4L5.4 4.3L4.5 5.2L3.6 4.3Z" fill="#1a1aff"/><path d="M1 4.9L4.1 7.8V10.8L1 8Z" fill="#b8cce8"/><path d="M5 7.8L8 5V7.6L5 10.4Z" fill="#707070"/></svg>
<div class="t" style="left:65px;top:310px;transform:scaleX(1.0094);transform-origin:0 0;">dwOneIPAddress</div>
<div class="a" style="left:1px;top:348px;width:805px;height:1px;background:#e3e3e3"></div>
<svg style="left:50px;top:333px" width="9" height="12" viewBox="0 0 9 12"><path d="M4.5 0.3L8.7 4.3V8L4.5 11.8L0.3 7.8V4.3Z" fill="#1a1a1a"/><path d="M4.5 1L8 4.3L4.5 7.4L1 4.3Z" fill="#d8e4ff"/><path d="M4.5 1.6L5.4 2.5L4.5 3.4L3.6 2.5ZM2.7 3.4L3.6 4.3L2.7 5.2L1.8 4.3ZM6.3 3.4L7.2 4.3L6.3 5.2L5.4 4.3ZM4.5 5.2L5.4 6.1L4.5 7L3.6 6.1ZM4.5 3.4L5.4 4.3L4.5 5.2L3.6 4.3Z" fill="#1a1aff"/><path d="M1 4.9L4.1 7.8V10.8L1 8Z" fill="#b8cce8"/><path d="M5 7.8L8 5V7.6L5 10.4Z" fill="#707070"/></svg>
<div class="t" style="left:65px;top:329px;transform:scaleX(1.0191);transform-origin:0 0;">pszHostName</div>
<div class="a" style="left:1px;top:367px;width:805px;height:1px;background:#e3e3e3"></div>
<svg style="left:50px;top:352px" width="9" height="12" viewBox="0 0 9 12"><path d="M4.5 0.3L8.7 4.3V8L4.5 11.8L0.3 7.8V4.3Z" fill="#1a1a1a"/><path d="M4.5 1L8 4.3L4.5 7.4L1 4.3Z" fill="#d8e4ff"/><path d="M4.5 1.6L5.4 2.5L4.5 3.4L3.6 2.5ZM2.7 3.4L3.6 4.3L2.7 5.2L1.8 4.3ZM6.3 3.4L7.2 4.3L6.3 5.2L5.4 4.3ZM4.5 5.2L5.4 6.1L4.5 7L3.6 6.1ZM4.5 3.4L5.4 4.3L4.5 5.2L3.6 4.3Z" fill="#1a1aff"/><path d="M1 4.9L4.1 7.8V10.8L1 8Z" fill="#b8cce8"/><path d="M5 7.8L8 5V7.6L5 10.4Z" fill="#707070"/></svg>
<div class="t" style="left:65px;top:348px;transform:scaleX(0.9880);transform-origin:0 0;">Read</div>
</div>
<div class="a" style="left:363px;top:161px;width:549px;height:3px;background:#ff0000"></div>
<div class="a" style="left:363px;top:507px;width:549px;height:3px;background:#ff0000"></div>
<div class="a" style="left:363px;top:161px;width:3px;height:349px;background:#ff0000"></div>
<div class="a" style="left:909px;top:161px;width:3px;height:349px;background:#ff0000"></div>
<div class="a" style="left:357px;top:510px;width:807px;height:1px;background:#fff"></div>
<div class="a" style="left:357px;top:511px;width:807px;height:1px;background:#8c8c8c"></div>
<div class="a" style="left:357px;top:512px;width:807px;height:5px;background:#f2f2f2"></div>
<div class="a" style="left:357px;top:517px;width:807px;height:1px;background:#a0a0a0"></div>
<div class="a" style="left:357px;top:518px;width:807px;height:202px;background:#fff;border-left:1px solid #6e6e6e"></div>
<div class="a" style="left:358px;top:518px;width:806px;height:22px;background:#98b2d0"></div>
<div class="a" style="left:358px;top:540px;width:806px;height:1px;background:#7a7a7a"></div>
<div class="t" style="left:363px;top:520px;font-size:10.8px;line-height:19px;color:#1a1a2a">Watch 1</div>
<div class="a" style="left:358px;top:541px;width:806px;height:179px;overflow:hidden;background:#fff">
<div class="a" style="left:465px;top:0px;width:1px;height:23px;background:#e3e3e3"></div>
<div class="a" style="left:465px;top:24px;width:1px;height:160px;background:#e3e3e3"></div>
<div class="a" style="left:585px;top:0px;width:1px;height:23px;background:#e3e3e3"></div>
<div class="a" style="left:585px;top:24px;width:1px;height:160px;background:#e3e3e3"></div>
<div class="a" style="left:685px;top:0px;width:1px;height:23px;background:#e3e3e3"></div>
<div class="a" style="left:685px;top:24px;width:1px;height:160px;background:#e3e3e3"></div>
<div class="a" style="left:804px;top:0px;width:1px;height:23px;background:#e3e3e3"></div>
<div class="a" style="left:804px;top:24px;width:1px;height:160px;background:#e3e3e3"></div>
<div class="t" style="left:7px;top:3px;font-size:11.3px;line-height:19px;transform:scaleX(1.0315);transform-origin:0 0;">Expression</div>
<div class="t" style="left:471px;top:3px;font-size:11.3px;line-height:19px;transform:scaleX(1.0964);transform-origin:0 0;">Application</div>
<div class="t" style="left:591px;top:3px;font-size:11.3px;line-height:19px;transform:scaleX(0.9333);transform-origin:0 0;">Type</div>
<div class="t" style="left:691px;top:3px;font-size:11.3px;line-height:19px;transform:scaleX(0.9750);transform-origin:0 0;">Value</div>
<div class="a" style="left:1px;top:43px;width:805px;height:1px;background:#e3e3e3"></div>
<svg style="left:6px;top:28px" width="9" height="9" viewBox="0 0 9 9"><rect x="0.5" y="0.5" width="8" height="8" rx="1.2" fill="url(#gb)" stroke="#9fd0d8"/><path d="M2 4.5H7" stroke="#000" stroke-width="1.2"/><path d="M4.5 2V7" stroke="#000" stroke-width="1.2"/></svg>
<svg style="left:28px;top:28px" width="9" height="12" viewBox="0 0 9 12"><path d="M4.5 0.3L8.7 4.3V8L4.5 11.8L0.3 7.8V4.3Z" fill="#1a1a1a"/><path d="M4.5 1L8 4.3L4.5 7.4L1 4.3Z" fill="#d8e4ff"/><path d="M4.5 1.6L5.4 2.5L4.5 3.4L3.6 2.5ZM2.7 3.4L3.6 4.3L2.7 5.2L1.8 4.3ZM6.3 3.4L7.2 4.3L6.3 5.2L5.4 4.3ZM4.5 5.2L5.4 6.1L4.5 7L3.6 6.1ZM4.5 3.4L5.4 4.3L4.5 5.2L3.6 4.3Z" fill="#1a1aff"/><path d="M1 4.9L4.1 7.8V10.8L1 8Z" fill="#b8cce8"/><path d="M5 7.8L8 5V7.6L5 10.4Z" fill="#707070"/></svg>
<div class="t" style="left:43px;top:24px;transform:scaleX(1.0017);transform-origin:0 0;">NetVar_Application_GVL.NetVarManager_UDP_MainTask_0.hSoketRx</div>
<div class="t" style="left:470px;top:24px;transform:scaleX(1.0192);transform-origin:0 0;">Controller_3200C.A...</div>
<div class="t" style="left:589px;top:25px;transform:scaleX(0.8979);transform-origin:0 0;">POINTER TO BYTE</div>
<div class="t" style="left:690px;top:24px;transform:scaleX(1.0227);transform-origin:0 0;">16#00000017</div>
<div class="a" style="left:1px;top:62px;width:805px;height:1px;background:#e3e3e3"></div>
<svg style="left:28px;top:47px" width="9" height="12" viewBox="0 0 9 12"><path d="M4.5 0.3L8.7 4.3V8L4.5 11.8L0.3 7.8V4.3Z" fill="#1a1a1a"/><path d="M4.5 1L8 4.3L4.5 7.4L1 4.3Z" fill="#d8e4ff"/><path d="M4.5 1.6L5.4 2.5L4.5 3.4L3.6 2.5ZM2.7 3.4L3.6 4.3L2.7 5.2L1.8 4.3ZM6.3 3.4L7.2 4.3L6.3 5.2L5.4 4.3ZM4.5 5.2L5.4 6.1L4.5 7L3.6 6.1ZM4.5 3.4L5.4 4.3L4.5 5.2L3.6 4.3Z" fill="#1a1aff"/><path d="M1 4.9L4.1 7.8V10.8L1 8Z" fill="#b8cce8"/><path d="M5 7.8L8 5V7.6L5 10.4Z" fill="#707070"/></svg>
<div class="t" style="left:43px;top:43px;transform:scaleX(1.0045);transform-origin:0 0;">NetVar_Application_GVL.NetVarManager_UDP_MainTask_0.diRxLen</div>
<div class="t" style="left:470px;top:43px;transform:scaleX(1.0192);transform-origin:0 0;">Controller_3200C.A...</div>
<div class="t" style="left:589px;top:44px;transform:scaleX(0.9400);transform-origin:0 0;">DINT</div>
<div class="t" style="left:690px;top:43px;">0</div>
<div class="a" style="left:1px;top:81px;width:805px;height:1px;background:#e3e3e3"></div>
<svg style="left:28px;top:66px" width="9" height="12" viewBox="0 0 9 12"><path d="M4.5 0.3L8.7 4.3V8L4.5 11.8L0.3 7.8V4.3Z" fill="#1a1a1a"/><path d="M4.5 1L8 4.3L4.5 7.4L1 4.3Z" fill="#d8e4ff"/><path d="M4.5 1.6L5.4 2.5L4.5 3.4L3.6 2.5ZM2.7 3.4L3.6 4.3L2.7 5.2L1.8 4.3ZM6.3 3.4L7.2 4.3L6.3 5.2L5.4 4.3ZM4.5 5.2L5.4 6.1L4.5 7L3.6 6.1ZM4.5 3.4L5.4 4.3L4.5 5.2L3.6 4.3Z" fill="#1a1aff"/><path d="M1 4.9L4.1 7.8V10.8L1 8Z" fill="#b8cce8"/><path d="M5 7.8L8 5V7.6L5 10.4Z" fill="#707070"/></svg>
<div class="t" style="left:43px;top:62px;transform:scaleX(1.0038);transform-origin:0 0;">NetVar_Application_GVL.NetVarManager_UDP_MainTask_0.diMsgCounter</div>
<div class="t" style="left:470px;top:62px;transform:scaleX(1.0192);transform-origin:0 0;">Controller_3200C.A...</div>
<div class="t" style="left:589px;top:63px;transform:scaleX(0.9400);transform-origin:0 0;">DINT</div>
<div class="t" style="left:690px;top:62px;">1</div>
<div class="a" style="left:1px;top:100px;width:805px;height:1px;background:#e3e3e3"></div>
<svg style="left:6px;top:85px" width="9" height="9" viewBox="0 0 9 9"><rect x="0.5" y="0.5" width="8" height="8" rx="1.2" fill="url(#gb)" stroke="#9fd0d8"/><path d="M2 4.5H7" stroke="#000" stroke-width="1.2"/></svg>
<svg style="left:28px;top:85px" width="9" height="12" viewBox="0 0 9 12"><path d="M4.5 0.3L8.7 4.3V8L4.5 11.8L0.3 7.8V4.3Z" fill="#1a1a1a"/><path d="M4.5 1L8 4.3L4.5 7.4L1 4.3Z" fill="#d8e4ff"/><path d="M4.5 1.6L5.4 2.5L4.5 3.4L3.6 2.5ZM2.7 3.4L3.6 4.3L2.7 5.2L1.8 4.3ZM6.3 3.4L7.2 4.3L6.3 5.2L5.4 4.3ZM4.5 5.2L5.4 6.1L4.5 7L3.6 6.1ZM4.5 3.4L5.4 4.3L4.5 5.2L3.6 4.3Z" fill="#1a1aff"/><path d="M1 4.9L4.1 7.8V10.8L1 8Z" fill="#b8cce8"/><path d="M5 7.8L8 5V7.6L5 10.4Z" fill="#707070"/></svg>
<div class="t" style="left:43px;top:81px;transform:scaleX(1.0059);transform-origin:0 0;">NetVar_Application_GVL.NetVarManager_UDP_MainTask_0.Read</div>
<div class="t" style="left:470px;top:81px;transform:scaleX(1.0192);transform-origin:0 0;">Controller_3200C.A...</div>
<div class="t" style="left:589px;top:82px;transform:scaleX(0.8911);transform-origin:0 0;">CLIENT_REPLY</div>
<div class="a" style="left:1px;top:119px;width:805px;height:1px;background:#e3e3e3"></div>
<svg style="left:48px;top:104px" width="9" height="12" viewBox="0 0 9 12"><path d="M4.5 0.3L8.7 4.3V8L4.5 11.8L0.3 7.8V4.3Z" fill="#1a1a1a"/><path d="M4.5 1L8 4.3L4.5 7.4L1 4.3Z" fill="#d8e4ff"/><path d="M4.5 1.6L5.4 2.5L4.5 3.4L3.6 2.5ZM2.7 3.4L3.6 4.3L2.7 5.2L1.8 4.3ZM6.3 3.4L7.2 4.3L6.3 5.2L5.4 4.3ZM4.5 5.2L5.4 6.1L4.5 7L3.6 6.1ZM4.5 3.4L5.4 4.3L4.5 5.2L3.6 4.3Z" fill="#1a1aff"/><path d="M1 4.9L4.1 7.8V10.8L1 8Z" fill="#b8cce8"/><path d="M5 7.8L8 5V7.6L5 10.4Z" fill="#707070"/></svg>
<div class="t" style="left:63px;top:100px;transform:scaleX(1.0333);transform-origin:0 0;">diBytesReceived</div>
<div class="t" style="left:589px;top:101px;transform:scaleX(0.9400);transform-origin:0 0;">DINT</div>
<div class="t" style="left:690px;top:100px;">20</div>
<div class="a" style="left:1px;top:138px;width:805px;height:1px;background:#e3e3e3"></div>
<svg style="left:48px;top:123px" width="9" height="12" viewBox="0 0 9 12"><path d="M4.5 0.3L8.7 4.3V8L4.5 11.8L0.3 7.8V4.3Z" fill="#1a1a1a"/><path d="M4.5 1L8 4.3L4.5 7.4L1 4.3Z" fill="#d8e4ff"/><path d="M4.5 1.6L5.4 2.5L4.5 3.4L3.6 2.5ZM2.7 3.4L3.6 4.3L2.7 5.2L1.8 4.3ZM6.3 3.4L7.2 4.3L6.3 5.2L5.4 4.3ZM4.5 5.2L5.4 6.1L4.5 7L3.6 6.1ZM4.5 3.4L5.4 4.3L4.5 5.2L3.6 4.3Z" fill="#1a1aff"/><path d="M1 4.9L4.1 7.8V10.8L1 8Z" fill="#b8cce8"/><path d="M5 7.8L8 5V7.6L5 10.4Z" fill="#707070"/></svg>
<div class="t" style="left:63px;top:119px;transform:scaleX(1.0344);transform-origin:0 0;">dwIPAddress</div>
<div class="t" style="left:589px;top:120px;transform:scaleX(0.9463);transform-origin:0 0;">DWORD</div>
<div class="t" style="left:690px;top:119px;transform:scaleX(0.9883);transform-origin:0 0;">1661315264</div>
<div class="a" style="left:1px;top:157px;width:805px;height:1px;background:#e3e3e3"></div>
<svg style="left:48px;top:142px" width="9" height="12" viewBox="0 0 9 12"><path d="M4.5 0.3L8.7 4.3V8L4.5 11.8L0.3 7.8V4.3Z" fill="#1a1a1a"/><path d="M4.5 1L8 4.3L4.5 7.4L1 4.3Z" fill="#d8e4ff"/><path d="M4.5 1.6L5.4 2.5L4.5 3.4L3.6 2.5ZM2.7 3.4L3.6 4.3L2.7 5.2L1.8 4.3ZM6.3 3.4L7.2 4.3L6.3 5.2L5.4 4.3ZM4.5 5.2L5.4 6.1L4.5 7L3.6 6.1ZM4.5 3.4L5.4 4.3L4.5 5.2L3.6 4.3Z" fill="#1a1aff"/><path d="M1 4.9L4.1 7.8V10.8L1 8Z" fill="#b8cce8"/><path d="M5 7.8L8 5V7.6L5 10.4Z" fill="#707070"/></svg>
<div class="t" style="left:63px;top:138px;transform:scaleX(1.0416);transform-origin:0 0;">stIPAddressTransmitter</div>
<div class="t" style="left:589px;top:139px;transform:scaleX(0.9383);transform-origin:0 0;">STRING(20)</div>
<div class="t" style="left:690px;top:138px;transform:scaleX(1.0045);transform-origin:0 0;">'192.168.5.99'</div>
<div class="a" style="left:1px;top:176px;width:805px;height:1px;background:#e3e3e3"></div>
</div>
<div class="a" style="left:363px;top:537px;width:781px;height:3px;background:#00ff00"></div>
<div class="a" style="left:363px;top:709px;width:781px;height:3px;background:#00ff00"></div>
<div class="a" style="left:363px;top:537px;width:3px;height:175px;background:#00ff00"></div>
<div class="a" style="left:1141px;top:537px;width:3px;height:175px;background:#00ff00"></div>
</body></html>
